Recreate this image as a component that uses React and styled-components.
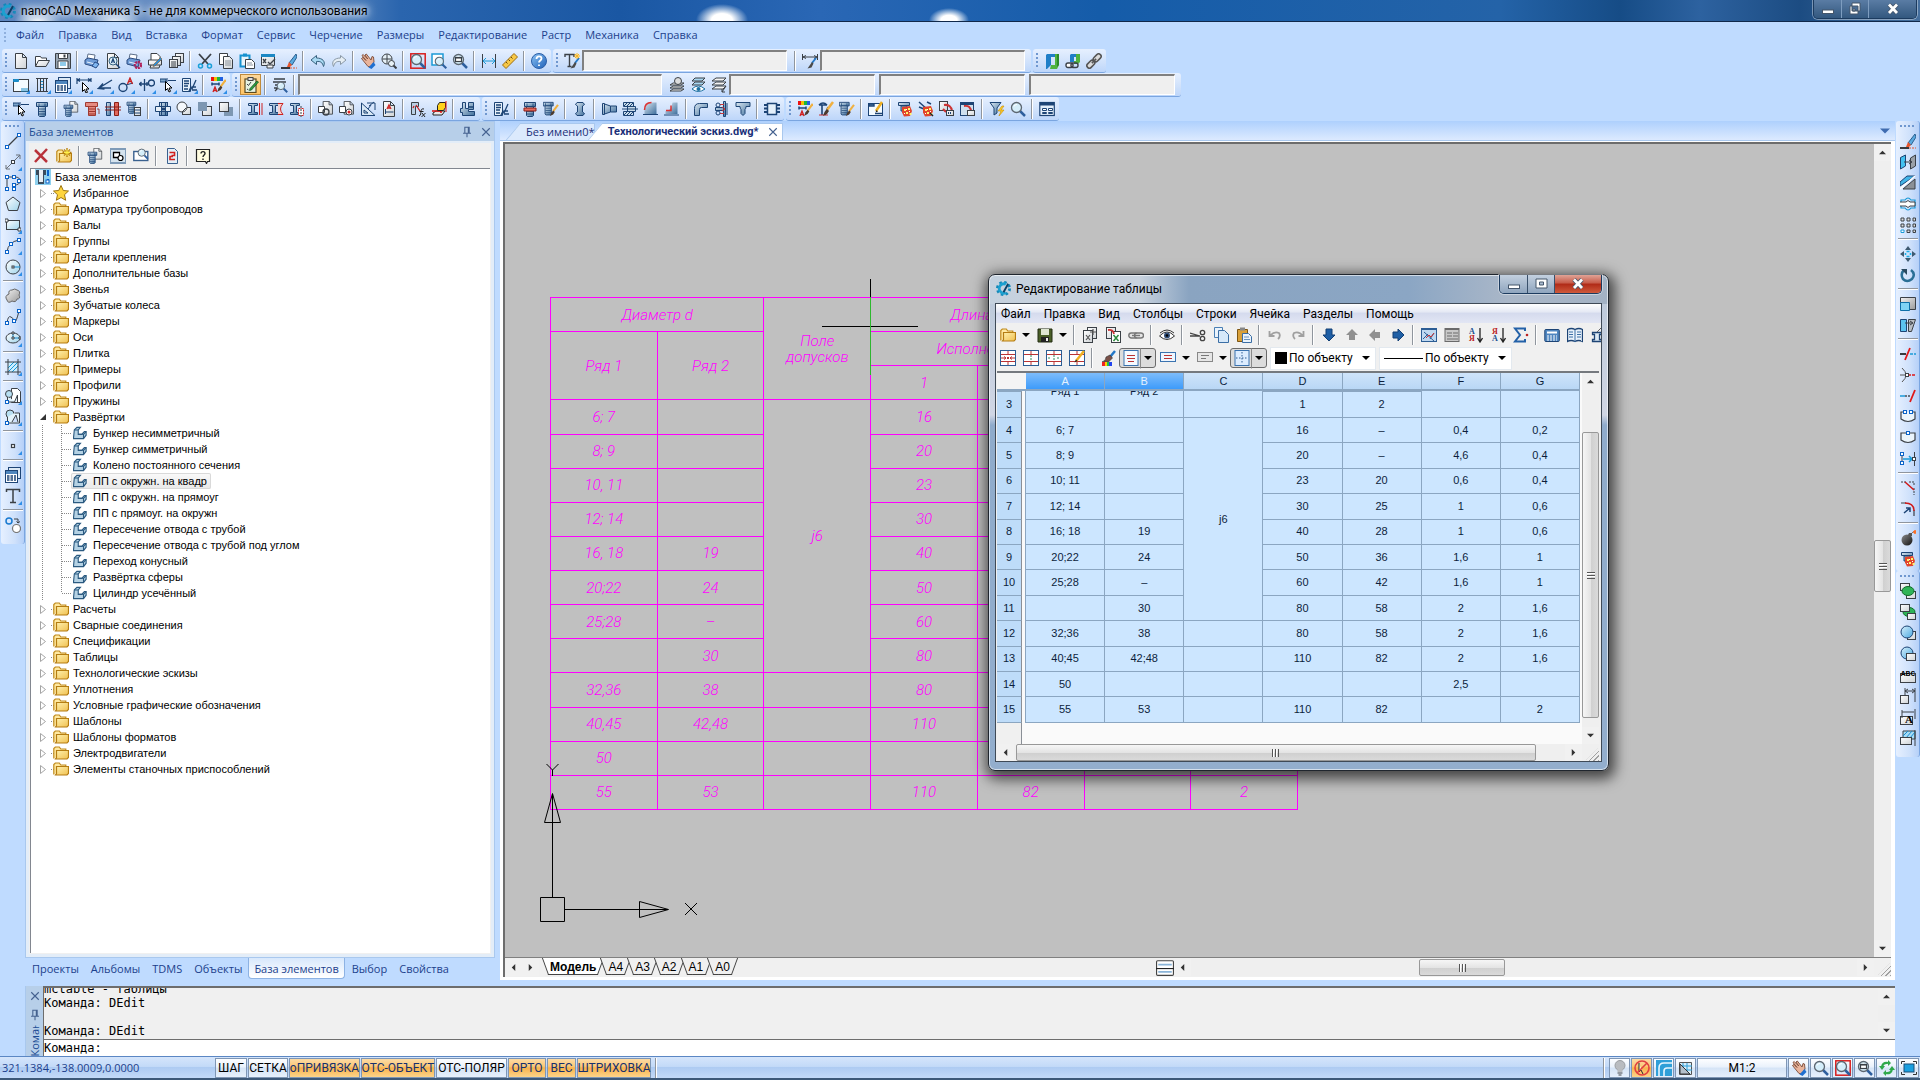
import React, { useState } from "react";
import styled, { createGlobalStyle, css } from "styled-components";

const GlobalStyle = createGlobalStyle`
  * { box-sizing: border-box; }
  body {
    margin: 0;
    overflow: hidden;
    background: #bfdbff;
    font-family: "Open Sans", "Noto Sans", sans-serif;
    font-size: 12px;
    color: #000;
  }
  button, select, input { font: inherit; color: inherit; }
  ul { list-style: none; margin: 0; padding: 0; }
`;

/* ---------- icons ---------- */

const ink = "#3b4046";
const navy = "#1d4475";

const bolt = (
  <g stroke={navy} strokeWidth="1">
    <path d="M2.5 1.500h11v4h-11z" fill="url(#steel)" />
    <path d="M4.5 5.500h7v9l-1 1h-5l-1-1z" fill="url(#steel)" />
    <path d="M5 8h6M5 10.500h6M5 13h6" strokeWidth=".8" />
    <path d="M5 2.500v2.500M11 2.500v2.500" strokeWidth=".8" />
  </g>
);
const page = (
  <path d="M2.5.5h7l4 4v11h-11zM9.5.5v4h4" fill="url(#page)" stroke={ink} />
);
const lens = (
  <g>
    <path d="M10 10l5 5" stroke="#2e5f9e" strokeWidth="2.5" />
    <circle cx="6.5" cy="6.5" r="5" fill="#d5eefa" stroke="#5c6670" strokeWidth="1.3" />
    <path d="M4 5.500a3 3 0 0 1 3-2" stroke="#fff" fill="none" />
  </g>
);
const brush = (
  <g>
    <path d="M15 1l-6 8" stroke="#f0b040" strokeWidth="2.5" />
    <path d="M9 8l2 2-2 3-4 2 1.500-4z" fill="#4b3a2e" />
  </g>
);
const hand = (
  <g>
    <path
      d="M1.5 5.500L3 4.500l3 3-4-5 1.200-1 4.500 4.500L5 2l1.300-1 4.700 6 1-3.500 1.500.5.5 5-2.500 5-3.500-.5z"
      fill="#e9b49b"
      stroke="#7b4a35"
      strokeWidth=".9"
    />
    <path d="M8.500 14.500l5-5.500 2 3-4 4z" fill="#1f6fd0" />
  </g>
);
const arrowCursor = (
  <path d="M5.500 4.500v9l2-2 1.500 3.500 1.500-.7-1.500-3.300h3z" fill="#fff" stroke="#000" />
);
const folder = (
  <g>
    <path d="M.8 13.500v-10l1.500-1.500h4l1.500 2h5v2" fill="#ffe9a0" stroke="#c08a1c" strokeWidth="1.2" />
    <path d="M3.500 5.500h12v7l-1.500 1.500h-11.500l1-1.500z" fill="url(#gold)" stroke="#b57d12" strokeWidth="1.2" />
  </g>
);
const printer = (
  <g>
    <path d="M4 1l7 1-1 6-7-2z" fill="#fff" stroke="#5d6f8a" />
    <path d="M1 7l3-2 10 2-2 7-11-3z" fill="#6f9cd6" stroke="#2a4a80" />
    <path d="M3 9l8 2" stroke="#e8f2ff" />
  </g>
);
const grey = (x, y, w = 8, h = 7) => (
  <rect x={x} y={y} width={w} height={h} fill="url(#page)" stroke={ink} />
);
const node = (x, y) => (
  <rect x={x - 1.5} y={y - 1.5} width="3" height="3" fill="#fff" stroke="#0a63c9" />
);
const sand = (
  <g>
    <path d="M5 6l8-1 2 5-2 5-6 .5-2-4z" fill="#e2452b" />
    <path d="M7 8h2v2H7zM11 7h2v2h-2zM9 11h2v2H9zM12.500 12h2v2h-2z" fill="#fff36b" />
    <path d="M9 8h1v1H9zM12 10h1v1h-1zM7 12h1v1H7z" fill="#fff" />
  </g>
);
const ibeam = (
  <path d="M1.500 2.500h9v2h-3v7h3v2h-9v-2h3v-7h-3z" fill="url(#steel)" stroke={navy} />
);

const icons = {
  new: page,
  open: (
    <>
      <path d="M1.500 13V3.500h5l1 1.500h5v2.500" fill="#fff" stroke={ink} />
      <path d="M1.500 13.500l3-6h11l-3.500 6z" fill="url(#page)" stroke={ink} />
    </>
  ),
  save: (
    <>
      <path d="M.5.5h15v15h-15z" fill="#9aa6b2" stroke={ink} />
      <path d="M3.500.5h9v5h-9zM3 8h10v7.500H3z" fill="#fff" stroke={ink} />
      <path d="M5 10h6M5 12h6" stroke="#2398d4" />
      <path d="M9.500 1.500v3" stroke={ink} strokeWidth="2" />
    </>
  ),
  print: (
    <>
      {printer}
      <path d="M11 9l4 2-3 4-4-2z" fill="#7fb6f0" stroke="#244a86" />
    </>
  ),
  preview: (
    <>
      {page}
      <circle cx="8" cy="8" r="4" fill="#dff1fa" stroke="#35627f" />
      <path d="M6.500 10L8 6l1.500 4M11 11l4 4" stroke={navy} fill="none" strokeWidth="1.4" />
    </>
  ),
  printset: (
    <>
      {printer}
      <circle cx="12" cy="12" r="3" fill="none" stroke="#b0205a" strokeWidth="2.5" strokeDasharray="2 .7" />
    </>
  ),
  plot: (
    <>
      <path d="M4 7V.5h6l3 3V7" fill="#fff" stroke={ink} />
      <path d="M1.500 7h13v5h-13zM4 12l-1 3h9l1-3" fill="url(#page)" stroke={ink} />
      <path d="M15 6l-7 7-2 .5.5-2 7-7z" fill="#2d8fd8" stroke="#8a5a2b" strokeWidth=".6" />
    </>
  ),
  batch: (
    <>
      {grey(7.5, 0.5, 8, 9)}
      {grey(4.5, 3.5, 8, 9)}
      {grey(1.5, 6.5, 8, 8)}
      <path d="M3 9h5M3 11h5M3 13h5" stroke={ink} />
    </>
  ),
  cut: (
    <>
      <path d="M2 1l9 10M14 1L5 11" stroke={ink} strokeWidth="1.8" />
      <circle cx="3.5" cy="13" r="2" fill="none" stroke="#1aa0d8" strokeWidth="1.5" />
      <circle cx="12.5" cy="13" r="2" fill="none" stroke="#1aa0d8" strokeWidth="1.5" />
    </>
  ),
  copy: (
    <>
      <path d="M1.500.5h8v11h-8z" fill="#fff" stroke={ink} />
      <path d="M5.500 3.500h6l3 3v9h-9z" fill="url(#page)" stroke={ink} />
      <path d="M7 8h6M7 10h6M7 12h6" stroke="#8a929a" />
    </>
  ),
  paste: (
    <>
      <path d="M1.500 2.500h9v11h-9z" fill="#e8f4fb" stroke="#1591cf" strokeWidth="2" />
      <path d="M4 .5h4v3H4z" fill="#1591cf" />
      <path d="M6.500 6.500h6l3 3v6h-9z" fill="#fff" stroke={ink} />
      <path d="M8 10h5M8 12h6" stroke="#8a929a" />
    </>
  ),
  pastespec: (
    <>
      <path d="M1.500 1.500h13v11h-13z" fill="url(#page)" stroke={ink} />
      <path d="M1 1h14v3H1z" fill="#1b88c4" />
      <path d="M3 6l3 4M6 6l-3 4M8 9l2 2 5-5" stroke={ink} strokeWidth="1.3" fill="none" />
      <path d="M7 12h6v3H7z" fill="#f3f3f3" stroke={ink} />
    </>
  ),
  erase: (
    <>
      <path d="M15 1l-7 9 3 2 5-8z" fill="#5aa9de" stroke="#2a5f8f" />
      <path d="M8 9l3 3-2 2H6z" fill="#e8552c" />
      <path d="M0 15h9" stroke="#000" strokeWidth="1.5" />
      <path d="M9 15h7" stroke="#e8552c" strokeDasharray="2 1" />
    </>
  ),
  undo: <path d="M6.500 2.500L1 7l5.500 4.500v-3c4-.5 6 1 7 5 2.500-5-1-8.500-7-8.500z" fill="#a8d9f2" stroke="#38627f" />,
  redo: <path d="M9.500 2.500L15 7l-5.500 4.500v-3c-4-.5-6 1-7 5-2.500-5 1-8.500 7-8.500z" fill="#e6eef4" stroke="#8b99a6" />,
  hand,
  zoomrt: (
    <>
      <circle cx="6" cy="6" r="5" fill="#e7f1f7" stroke={ink} />
      <path d="M6 1.500v9M1.500 6h9" stroke={ink} />
      <circle cx="10.5" cy="10.5" r="3" fill="#e7f1f7" stroke={ink} />
      <path d="M12.500 12.500l3 3" stroke={ink} strokeWidth="2" />
    </>
  ),
  zoomwin: (
    <>
      <rect x=".8" y=".8" width="14.4" height="14.4" fill="none" stroke="#d81e1e" strokeWidth="1.5" />
      {lens}
    </>
  ),
  zoomext: (
    <>
      <rect x="1" y="1" width="11" height="11" fill="#fff" stroke="#1b9ad6" strokeWidth="1.5" />
      <g transform="translate(3 3) scale(.82)">{lens}</g>
    </>
  ),
  zoomall: (
    <>
      {lens}
      <rect x="3.5" y="4.5" width="6" height="4" fill="#fff" stroke={ink} strokeWidth="1.2" />
      <path d="M3.500 5h6" stroke={ink} />
    </>
  ),
  dist: (
    <>
      <path d="M1.500 1v14M14.500 1v14" stroke={ink} />
      <path d="M2 8h12M5 5L2 8l3 3M11 5l3 3-3 3" stroke="#1a9ad8" fill="none" />
    </>
  ),
  ruler: (
    <>
      <path d="M12 .5l3.500 3.500L4 15.500.5 12z" fill="#f7c846" stroke="#9c6c10" />
      <path d="M4 9l1.500 1.500M6.500 6.500L8 8M9 4l1.500 1.500" stroke="#6b4a08" />
    </>
  ),
  help: (
    <>
      <circle cx="8" cy="8" r="7.5" fill="url(#ball)" stroke="#2c5fa8" />
      <path d="M5.500 6c0-3.500 5-3.500 5-.5 0 2-2.500 2-2.500 4M8 11.500v1.500" stroke="#fff" strokeWidth="1.8" fill="none" />
    </>
  ),
  textstyle: (
    <>
      <path d="M1 4V1.500h9V4M5.500 1.500v12M3.500 13.500h4" stroke={ink} strokeWidth="1.4" fill="none" />
      <path d="M15 5l-4 5" stroke="#2378c8" strokeWidth="2" />
      <path d="M11 9l1.500 1.500-2 4-4 1z" fill="#4a4a4a" />
      <path d="M13 0v6M10 3h6M11 1l4 4M15 1l-4 4" stroke="#ffb81c" />
    </>
  ),
  dimstyle: (
    <>
      <path d="M.5 1v6M15.500 1v6M1 4h14M4 2.500L1 4l3 1.500M12 2.500L15 4l-3 1.500" stroke={ink} fill="none" />
      <path d="M14 5l-4 5" stroke="#2378c8" strokeWidth="2" />
      <path d="M10 9l1.500 1.500-2 4-4 1z" fill="#4a4a4a" />
    </>
  ),
  ncad: (
    <>
      <path d="M3 1h8v3H7v8l-4 4H2V2z" fill="#1f7fc8" />
      <path d="M11 1h4v11l-2 4H6l1-4h4z" fill="#4fb33f" />
      <path d="M13 1h2v11l-2 2z" fill="#2c8a2c" />
    </>
  ),
  ncadlink: (
    <>
      <path d="M6 1h5v3H9v5H5V2z" fill="#1f7fc8" />
      <path d="M11 1h4v8l-2 2H9V8h2z" fill="#4fb33f" />
      <rect x="1" y="10" width="7" height="4.5" rx="2" fill="#fff" stroke={ink} strokeWidth="1.4" />
      <rect x="6" y="10" width="7" height="4.5" rx="2" fill="none" stroke={ink} strokeWidth="1.4" />
    </>
  ),
  chain: (
    <g transform="rotate(-45 8 8)" fill="#dcdcdc" stroke="#555" strokeWidth="1.6">
      <rect x="-1" y="5.5" width="9" height="5" rx="2.5" />
      <rect x="8" y="5.5" width="9" height="5" rx="2.5" />
      <path d="M5 8h6" />
    </g>
  ),
  frame: (
    <>
      <rect x=".5" y="2.5" width="15" height="12" fill="#f4fbff" stroke={ink} />
      <path d="M.5 2.500h5v2h-5zM8 12h7M8 14h7" fill="#1a8cc8" stroke="#1a8cc8" />
    </>
  ),
  column: (
    <>
      <path d="M2 1.500h12M2 14.500h12M3.500 1v14M12.500 1v14M6.500 1v14M9.500 1v14" stroke={ink} />
      <path d="M7 4h2v1H7zM7 7h2v1H7zM7 10h2v1H7z" fill="#1a8cc8" />
    </>
  ),
  cards: (
    <>
      <rect x="3.5" y=".5" width="12" height="11" fill="#dce9f5" stroke={navy} />
      <rect x=".5" y="3.5" width="12" height="12" fill="#fff" stroke={navy} />
      <path d="M1 4h11v3H1z" fill="#4f86bd" />
      <path d="M2 9h2.500M5.500 9H8M9 9h2M2 11h2.500M5.500 11H8M9 11h2M2 13h2.500M5.500 13H8M9 13h2" stroke={navy} strokeWidth="1.3" />
    </>
  ),
  dimsel: (
    <>
      <path d="M1 1v6M15 1v4M1 3h14M4 1.500L1.500 3 4 4.500M12 1.500L14.500 3 12 4.500" stroke={navy} strokeWidth="1.2" fill="none" />
      <g transform="translate(1 1)">{arrowCursor}</g>
    </>
  ),
  leader: <path d="M15 3L2 11h12M6 6.500l-4.500 5 6 .5" stroke={navy} fill="none" strokeWidth="1.4" />,
  nodeA: (
    <>
      <circle cx="5" cy="10.5" r="4" fill="none" stroke={navy} strokeWidth="1.4" />
      <path d="M8 8l7-2" stroke={navy} />
      <path d="M9.500 7l2.500-6 2.500 6M10.500 4.500h3.500" stroke="#c81e1e" fill="none" strokeWidth="1.3" />
    </>
  ),
  axis: (
    <>
      <path d="M0 7h10M5.500 2v12M2.500 5l-2 2 2 2M8 5v4" stroke={navy} fill="none" strokeWidth="1.3" />
      <circle cx="12.5" cy="6" r="3" fill="none" stroke={navy} strokeWidth="1.3" />
    </>
  ),
  selbox: (
    <>
      <path d="M0 2h6v3H0zM7 1v4M8 3.500h8" fill="#7da5cb" stroke={navy} />
      {arrowCursor}
    </>
  ),
  notes: (
    <>
      <path d="M1.500 1.500h8v13h-8z" fill="#e7f1fa" stroke={navy} />
      <path d="M3 4h5M3 6.500h5M3 9h4M3 12h4M8 14l2-4 1 2 4-9M11 10h4M11 13h5" stroke={navy} fill="none" strokeWidth="1.3" />
    </>
  ),
  palette: (
    <>
      <path d="M1 0h3v4H1z" fill="#e11" />
      <path d="M4 0h3v4H4z" fill="#f0c000" />
      <path d="M7 0h3v4H7z" fill="#1bb53c" />
      <path d="M10 0h3v4h-3z" fill="#2060e0" />
      <path d="M2 5.500v3M9 5.500v3M2 7h7" stroke={navy} strokeWidth="1.5" />
      <path d="M3 15l2-5 2 5M4 13.500h3" stroke="#d02020" fill="none" strokeWidth="1.3" />
      <g transform="translate(3 2) scale(.85)">{brush}</g>
    </>
  ),
  clip: (
    <>
      <rect x="2" y="2" width="11" height="13.5" fill="#e6f2e2" stroke="#5d4a20" strokeWidth="1.2" />
      <rect x="5" y=".5" width="5" height="3" fill="#ddd" stroke="#444" />
      <path d="M4 7l1.500 1.500L8 5M4 12l1.500 1" stroke={ink} fill="none" />
      <path d="M15.500 5l-7 8-2 .5.5-2L14 4z" fill="#2ea043" stroke="#114b1c" strokeWidth=".7" />
    </>
  ),
  find: (
    <>
      <path d="M2 2h11M1 5h13M3 8h4M2 11h3M3 14l3-3" stroke={ink} strokeWidth="1.3" />
      <g transform="translate(4 4) scale(.75)">{lens}</g>
    </>
  ),
  layers: (
    <>
      <path d="M1 8l3-2h11l-3 2zM1 11l3-2h11l-3 2zM1 14l3-2h11l-3 2z" fill="#f5f5f5" stroke={ink} />
      <circle cx="9" cy="4" r="3.5" fill="#ddd" stroke={ink} />
    </>
  ),
  layeye: (
    <>
      <path d="M2 4l3-3h10l-3 3zM2 8l3-3h10l-3 3z" fill="#a9d7f2" stroke={ink} />
      <path d="M2 12q6-6 13 0-7 5-13 0z" fill="#fff" stroke="#1b6fa0" />
      <circle cx="8.5" cy="12" r="2" fill="#1b6fa0" />
    </>
  ),
  layarrow: (
    <>
      <path d="M1 4l4-3h10l-3 3zM1 8l4-3h10l-3 3zM1 12l4-3h10l-3 3z" fill="#f5f5f5" stroke={ink} />
      <path d="M15 9l-4 6M11 12v3h3" stroke={ink} fill="none" />
    </>
  ),
  bolt,
  boltpage: (
    <>
      <g transform="translate(5 0) scale(.72)">{page}</g>
      <g transform="translate(-1 3) scale(.8)">{bolt}</g>
    </>
  ),
  boltred: (
    <>
      <path d="M1.500 1.500h12v4h-12zM4.500 5.500h7v9h-7z" fill="#e58a80" stroke="#a03a32" />
      <path d="M5 8h6M5 10.500h6M5 13h6M13 8h2v5" stroke="#8a1f18" strokeWidth=".8" fill="none" />
    </>
  ),
  boltpair: (
    <>
      <path d="M1.500 1.500h4v13h-4z" fill="url(#steel)" stroke={navy} />
      <path d="M9.500 1.500h4v13h-4z" fill="#e0675c" stroke="#8a1f18" />
      <path d="M0 6h16M0 9h16" stroke="#8a1f18" />
    </>
  ),
  boltset: (
    <>
      <g transform="translate(-1 0) scale(.8)">{bolt}</g>
      {grey(8.5, 6.5, 6, 8)}
      <path d="M9 9h5M9 12h5" stroke={navy} />
    </>
  ),
  motor: (
    <>
      <rect x="4.5" y="1.5" width="8" height="13" fill="url(#steel)" stroke={navy} />
      <path d="M.5 5.500h15v5h-15zM6.500 2v12M10.500 2v12" fill="#e8f0f8" stroke={navy} />
      <path d="M6 8h5" stroke={navy} strokeWidth="3" />
    </>
  ),
  circsq: (
    <>
      {grey(6.5, 6.5, 8, 7)}
      <circle cx="6" cy="6" r="5" fill="#f4f8fc" stroke={ink} />
      <path d="M6 11l4-4" stroke={ink} />
    </>
  ),
  sqback: (
    <>
      {grey(5.5, 5.5, 9, 9)}
      <path d="M1 1h9v9H1z" fill="#7d97b2" />
    </>
  ),
  sqfront: (
    <>
      <path d="M6 6h9v9H6z" fill="#7d97b2" />
      {grey(1.5, 1.5, 9, 9)}
    </>
  ),
  ibeam: (
    <>
      {ibeam}
      <path d="M12.500 2v12M15 2v12" stroke="#c22" />
    </>
  ),
  ibeamc: (
    <>
      {ibeam}
      <path d="M10 2.500h5q-5 5.500 0 11h-5" stroke="#c22" fill="#f5d3d0" />
    </>
  ),
  ibeamd: (
    <>
      {ibeam}
      <path d="M9.500 7.500h5v7h-5z" fill="#fff" stroke="#c22" strokeDasharray="2 1" />
      <path d="M12 5v11" stroke={ink} strokeDasharray="2 1" />
    </>
  ),
  pagec: (
    <>
      <g transform="translate(3 0) scale(.85)">{page}</g>
      <path d="M.5 5.500h6v6h-6z" fill="#fff" stroke={ink} />
      <circle cx="8" cy="11" r="3" fill="none" stroke={ink} strokeWidth="1.3" />
    </>
  ),
  pager: (
    <>
      <g transform="translate(3 0) scale(.85)">{page}</g>
      <path d="M.5 5.500h6v6h-6z" fill="#fff" stroke={ink} />
      <circle cx="10" cy="11" r="3" fill="#fff" stroke={ink} />
      <circle cx="10" cy="11" r="1.5" fill="#d22" />
    </>
  ),
  drawing: (
    <>
      <path d="M1.500 2v12.500H15zM4 9v3h4z" fill="#d9e8f5" stroke={navy} />
      <path d="M7 2h8v7M9 5l5-4M8 8l3-4" stroke={navy} fill="none" />
    </>
  ),
  pageA: (
    <>
      {page}
      <path d="M6 8l2-4 2 4M7 7h2" stroke="#c22" fill="none" strokeWidth="1.3" />
      <path d="M4.500 8v5M4.500 11h8" stroke={navy} />
    </>
  ),
  fx: (
    <>
      <path d="M1.500 13.500v-12h7v4h-3v8z" fill="#b9cfe4" stroke={ink} />
      <path d="M6 4l4 6M4 5l-1 2" stroke="#c22" strokeWidth="1.3" />
      <path d="M9 15q2 0 2-4t3-3M9.500 10.500h4M12 12l3 4M15.500 12l-4 4" stroke="#222" fill="none" />
    </>
  ),
  cube: (
    <>
      <path d="M2 12l3-2h9l-3 4H2z" fill="#e8e8e8" stroke="#222" />
      <path d="M1 10h9v2" fill="none" stroke="#d11" strokeWidth="1.5" />
      <path d="M6.500 4.500l2-3h6v5l-2 3h-6z" fill="#ffd21c" stroke="#222" />
      <path d="M15 0v11" stroke="#d11" />
    </>
  ),
  vise: (
    <>
      <path d="M2.500 1.500h3v6h3v-6h5v7h-5v2h6v4h-12v-3h-2v-4h2z" fill="url(#steel)" stroke={navy} />
      <path d="M8 6h5" stroke={navy} strokeWidth="1.5" />
    </>
  ),
  boltcap: (
    <>
      {bolt}
      <path d="M2 7h12v3H2z" fill="#e46a5f" stroke="#8a1f18" />
    </>
  ),
  boltbrush: (
    <>
      <g transform="translate(-2 0) scale(.9)">{bolt}</g>
      <g transform="translate(3 3) scale(.8)">{brush}</g>
    </>
  ),
  shaft: <path d="M5 1.500h6l1.500 2-2 1.500v6l2 1.500-1.500 2H5l-1.500-2 2-1.500v-6l-2-1.500z" fill="url(#steel)" stroke={navy} />,
  cone: <path d="M1.500 2.500h2v11h-2zM3.500 3l6 2v6l-6 2zM9.500 5h6v6h-6z" fill="url(#steel)" stroke={navy} />,
  section: (
    <>
      <path d="M1.500 1.500h10v4h-10zM1.500 10.500h10v4h-10zM5.500 5.500h8v5h-8z" fill="#c9dceb" stroke={navy} />
      <path d="M2 5l3-3M5 5l3-3M8 5l3-3M2 14l3-3M5 14l3-3M8 14l3-3M0 8h16" stroke={navy} />
    </>
  ),
  chamfer: (
    <>
      <path d="M1.500 13V7q0-5.500 6-5.500h6V13z" fill="url(#steel)" />
      <path d="M1.500 9q0-7.500 7-7.500" stroke="#d33" fill="none" strokeWidth="1.5" />
      <path d="M0 13.500h15" stroke={navy} />
    </>
  ),
  fillet: (
    <>
      <path d="M1.500 13v-3q6 0 7-8.500h5V13z" fill="url(#steel)" />
      <path d="M2 9.500h5v-5" stroke="#d33" fill="none" strokeWidth="1.5" />
      <path d="M0 14h15" stroke={navy} />
    </>
  ),
  elbow: <path d="M1.500 14.500v-7q0-5 5-5h8v4h-6q-2 0-2 2v6z" fill="url(#steel)" stroke={navy} />,
  flange: (
    <>
      <path d="M9.500.5h2v15h-2zM1.500 6.500h8v3h-8zM13 2v12" fill="url(#steel)" stroke={navy} />
      <path d="M6 3.500h4M6 12.500h4M8 6l3 2-3 2" stroke="#c33" fill="none" />
      <circle cx="4" cy="4" r="2" fill="none" stroke={navy} />
      <circle cx="4" cy="12" r="2" fill="none" stroke={navy} />
    </>
  ),
  tee: <path d="M1 1.500h14v4h-4q0 2-1 3v4l-2 2-2-2v-4q-1-1-1-3H1z" fill="url(#steel)" stroke={navy} />,
  spring: (
    <>
      <rect x="3.5" y="2.5" width="9" height="11" fill="#e5f0fa" stroke={navy} strokeWidth="1.5" />
      <path d="M1.500 3v10M14.500 3v10" stroke={navy} strokeWidth="3" strokeDasharray="2 1.500" />
    </>
  ),
  abrush: (
    <>
      <path d="M1 4q4-4 8 0M4 14V4M1 4h8M7 14l3-8" stroke={navy} fill="none" strokeWidth="1.6" />
      <path d="M1 14h9" stroke="#c33" />
      {brush}
    </>
  ),
  framep: (
    <>
      <rect x=".5" y="2.5" width="14" height="12" fill="#f4fbff" stroke={navy} />
      <path d="M1 3h5v2H1zM7 12.500h7" fill="#6b95bd" stroke={navy} strokeWidth="1.4" />
      <path d="M14 1l-6 9" stroke="#f0b020" strokeWidth="2.5" />
      <path d="M8.500 9L7.500 11.500 10 10.500z" fill="#222" />
    </>
  ),
  sand1: (
    <>
      <path d="M1.500 1.500h11v3h-11zM4 5h6v5H4z" fill="url(#steel)" stroke={navy} />
      {sand}
    </>
  ),
  sand2: (
    <>
      <path d="M1 1l9 8M1 6l5 2M9 1l4 2" stroke={navy} strokeWidth="1.5" />
      {sand}
      <path d="M12 12l3 3" stroke="#222" strokeWidth="1.5" />
    </>
  ),
  clock1: (
    <>
      {grey(0.5, 0.5, 8, 9)}
      <path d="M5 4q7-1 8 6M4 8l3 3" stroke="#c33" fill="none" strokeWidth="2" />
      {grey(7.5, 9.5, 7, 5)}
      <path d="M9 12h4" stroke={navy} strokeWidth="2" strokeDasharray="1 1" />
    </>
  ),
  clock2: (
    <>
      <rect x=".5" y="1.5" width="13" height="13" fill="#cfe0ef" stroke={navy} />
      <path d="M0 2.500h14" stroke={navy} strokeWidth="3" />
      <path d="M4 5q7-1 7 6" stroke="#c33" fill="none" strokeWidth="2" />
      {grey(7.5, 9.5, 7, 5)}
    </>
  ),
  filter: (
    <>
      <path d="M1 1.500h11L8 7v5l-3 2V7z" fill="url(#steel)" stroke={navy} />
      <path d="M13 5l-4 5h3l-2 5 5-6h-3l3-4z" fill="#ffcf26" stroke="#c88a00" strokeWidth=".6" />
    </>
  ),
  lens,
  tbl: (
    <>
      <rect x=".8" y="1.5" width="14.5" height="13" fill="#e3eefa" stroke={navy} strokeWidth="1.2" />
      <path d="M1 3h14" stroke={navy} strokeWidth="3" />
      <path d="M3.500 7.500h4v2h-4zM9.500 7.500h4v2h-4zM3.500 11.500h4v1h-4zM9.500 11.500h4v1h-4z" fill="#fff" stroke={navy} />
    </>
  ),
  del: <path d="M2 2l12 12M14 1L2 14" stroke="#b8323a" strokeWidth="2.5" />,
  foldernew: (
    <>
      {folder}
      <path d="M11 0v9M6.500 4.500h9M8 1.500l6 6M14 1.500l-6 6" stroke="#b57d12" strokeWidth="1.4" />
      <path d="M11 1.500v6M8 4.500h6M9 2.500l4 4M13 2.500l-4 4" stroke="#fff04a" />
    </>
  ),
  shapes: (
    <>
      <rect x="0" y="0" width="16" height="16" fill="#7f9bb8" />
      <path d="M1 2h14v12H1z" fill="#d5e3ee" />
      <path d="M3.500 4.500h6v5h-6z" fill="#fff" stroke="#000" strokeWidth="1.3" />
      <circle cx="10.5" cy="10" r="2.5" fill="#fff" stroke="#000" strokeWidth="1.2" />
    </>
  ),
  lensbox: (
    <>
      <rect x=".8" y="3.5" width="14" height="9" fill="#fff" stroke="#3a618f" strokeWidth="1.4" />
      <g transform="translate(4 0) scale(.72)">{lens}</g>
    </>
  ),
  refresh: (
    <>
      <path d="M3.500.5h7l3 3v12h-10z" fill="#e4eef7" stroke="#3a618f" />
      <path d="M5.500 4.500h5v3h-3M11 11.500H6v-3h3" stroke="#d12020" fill="none" strokeWidth="1.6" />
    </>
  ),
  helpnote: (
    <>
      <path d="M1.500 1.500h13v12h-2l-1 2-1-2h-9z" fill="#fffce0" stroke="#222" strokeWidth="1.2" />
      <path d="M6 5.500c0-2.500 4-2.500 4 0 0 1.500-2 1.500-2 3.500M8 10.500v1.500" stroke="#222" strokeWidth="1.4" fill="none" />
    </>
  ),
  root: (
    <>
      <path d="M0 0h16v16H0z" fill="#8ed0ee" />
      <path d="M1 1h10v5H9v9H3V6H1z" fill="#3a4b5c" />
      <path d="M4 1h4v12H4z" fill="#e8eef3" />
      <path d="M13 1v6M13 10v4" stroke="#0a63c9" strokeWidth="2" />
      {node(12.5, 12.5)}
    </>
  ),
  star: <path d="M8 .5l2.300 5 5.200.5-4 3.700 1.200 5.600L8 12.500l-4.700 2.800 1.200-5.600-4-3.700 5.200-.5z" fill="#ffd53d" stroke="#9c7410" />,
  folder,
  part: (
    <>
      <path d="M1.500 4.500l3-3h4l-2.500 3v5h4l3-3h2v4l-3 4h-11.500z" fill="#b5d2e4" stroke="#2b5a80" strokeWidth="1.3" />
      <path d="M1.500 4.500H6M6 9.500h6v5M12 9.500l3-3" stroke="#2b5a80" strokeWidth="1.2" fill="none" />
    </>
  ),
  /* drawing */
  line: (
    <>
      <path d="M2 14L14 2" stroke={ink} strokeWidth="1.2" />
      {node(2, 14)}
      {node(14, 2)}
    </>
  ),
  ray: (
    <>
      <path d="M1 15L15 1M11 1h4v4M1 11v4h4" stroke="#6a7078" fill="none" />
      <rect x="6.5" y="6.5" width="3" height="3" fill="#fff" stroke={ink} />
    </>
  ),
  pline: (
    <>
      <path d="M2 14V2h8q5 0 5 4t-6 4v4" stroke={ink} fill="none" />
      {node(2, 2)}
      {node(2, 14)}
      {node(9, 2)}
      {node(14, 6)}
      {node(9, 10)}
      {node(9, 14)}
    </>
  ),
  polygon: <path d="M8 1l7 5.500-2.500 8h-9L1 6.500z" fill="url(#sky)" stroke={ink} />,
  rect: (
    <>
      <rect x="1.5" y="3.5" width="13" height="9" fill="url(#sky)" stroke={ink} />
      <path d="M0 2h3v3H0zM13 11h3v3h-3z" fill="#fff" stroke={ink} />
    </>
  ),
  arc: (
    <>
      <path d="M2 14Q3 4 14 2" stroke={ink} fill="none" />
      {node(2, 14)}
      {node(6, 6)}
      {node(14, 2)}
    </>
  ),
  circle: (
    <>
      <circle cx="8" cy="8" r="7" fill="url(#sky)" stroke={ink} />
      <path d="M8 8h7" stroke="#1a8cd0" />
      <rect x="7" y="7" width="2" height="2" fill="#fff" stroke={ink} />
    </>
  ),
  cloud: <path d="M4 6q-1-4 3-4 3-2 5 0 4 1 2 5 2 4-2 4-1 4-5 2-4 3-5-1-3-4 2-6z" fill="url(#cloudy)" stroke="#666" />,
  spline: (
    <>
      <path d="M2 14q1-8 4-6t4 4 4-10" stroke={ink} fill="none" />
      {node(2, 14)}
      {node(9, 12)}
      {node(14, 2)}
    </>
  ),
  ellipse: (
    <>
      <ellipse cx="8" cy="8" rx="7" ry="5" fill="url(#sky)" stroke={ink} />
      <path d="M8 3v5h7" stroke="#1a8cd0" fill="none" />
      <path d="M7 7h2v2H7zM7 2h2v2H7zM14 7h2v2h-2z" fill="#fff" stroke={ink} />
    </>
  ),
  hatch: (
    <>
      <path d="M3 3h10v10H3z" fill="#cdeeff" />
      <path d="M3 9l6-6M3 13L13 3M7 13l6-6" stroke="#1a9ad8" />
      <path d="M3 0v16M13 0v16M0 3h16M0 13h16" stroke={ink} />
    </>
  ),
  region: (
    <>
      <path d="M6.500.5h6l3 3v11h-9z" fill="#fff" stroke={ink} />
      <circle cx="4" cy="6" r="3.5" fill="#b7dff2" stroke={ink} />
      <path d="M2.500 9v5h7l3-7v7" fill="#e3f3fb" stroke={ink} />
      {node(2, 14)}
    </>
  ),
  block: (
    <>
      <circle cx="5" cy="5" r="4" fill="#b7dff2" stroke={ink} />
      <path d="M2.500 8v6h12v-10h-5M7 13l4-7 2 7" fill="#e3f3fb" stroke={ink} />
      {node(2, 14)}
    </>
  ),
  point: <rect x="6.5" y="6.5" width="3" height="3" fill="#fff" stroke={ink} strokeWidth="1.2" />,
  text: <path d="M1.500 4V1.500h13V4M8 1.500v13M5 14.500h6" stroke={ink} strokeWidth="1.5" fill="none" />,
  circles: (
    <>
      <circle cx="4" cy="4" r="3" fill="none" stroke="#1a7ad0" strokeWidth="1.5" />
      <circle cx="11.5" cy="11.5" r="4" fill="#fff" stroke="#777" strokeWidth="1.2" />
      <path d="M9 2h4v4M11.500 4.500L13 6l2-1.500" stroke={ink} fill="none" />
    </>
  ),
  /* modify */
  mirror: (
    <>
      <path d="M.5 3.500l5-2.500v11l-5 3z" fill="#42c1f0" stroke={navy} />
      <path d="M15.500 1v11l-5 3V4z" fill="#9aa0a6" stroke={ink} />
      <path d="M4 8h7M9 6l3 2-3 2" stroke={ink} fill="none" />
    </>
  ),
  diag: (
    <>
      <path d="M0 11V7l7-6h8z" fill="#42b5e8" stroke={navy} />
      <path d="M3 14h12V4z" fill="#8b9096" stroke={ink} />
      <path d="M0 14L15 1" stroke="#fff" strokeWidth="1.5" />
    </>
  ),
  offset: (
    <>
      <path d="M1 4h4q3-4 6 0h4v8h-4q-3 4-6 0H1z" fill="none" stroke="#1a9ad8" strokeWidth="1.2" />
      <path d="M0 6h6q2-3 4 0h5v4h-5q-2 3-4 0H0" fill="#fff" stroke={ink} />
    </>
  ),
  array: (
    <>
      <path d="M1 1h3v3H1zM7 1h3v3H7zM13 1h2.500v3H13zM1 7h3v3H1zM7 7h3v3H7zM13 7h2.500v3H13zM7 13h3v2.500H7zM13 13h2.500v2.500H13z" fill="#ddd" stroke={ink} />
      <path d="M1 13h3v2.500H1z" fill="#fff" stroke="#1a9ad8" />
    </>
  ),
  move: (
    <>
      <path d="M8 0L5 4h6zM8 16l-3-4h6zM0 8l4-3v6zM16 8l-4-3v6z" fill="#3f5a70" />
      <path d="M6.500 5.500h3M6.500 10.500h3M5.500 7v2M10.500 7v2" stroke="#1ab0e8" strokeWidth="1.5" />
    </>
  ),
  rotate: (
    <>
      <path d="M11 3q5 4 1 9-5 4-9 0-3-5 1-9" stroke="#2a6f96" strokeWidth="2.5" fill="none" />
      <path d="M1 2h6v6z" fill="#2a4a60" />
    </>
  ),
  scale: (
    <>
      <path d="M.5 1.500h15v12h-15z" fill="url(#cloudy)" stroke={ink} />
      <path d="M.5 6.500h9v8h-9z" fill="#7fd3f5" stroke="#0d6fa8" />
    </>
  ),
  stretch: (
    <>
      <path d="M.5 2.500h6v12h-6z" fill="#5cc3ef" stroke={navy} />
      <path d="M8.500 14.500v-12h7l-4 12z" fill="#b9bec4" stroke={ink} />
      <path d="M5 6h7M10 4l3 2-3 2" stroke={ink} fill="none" />
    </>
  ),
  trim: (
    <>
      <path d="M0 8h6" stroke="#000" strokeWidth="1.5" />
      <path d="M10 8h6" stroke="#1a9ad8" strokeWidth="1.5" strokeDasharray="3 1" />
      <path d="M5 14L10 2" stroke="#e01818" strokeWidth="1.8" />
    </>
  ),
  extend: (
    <>
      <path d="M2 1q8 7 0 14M0 8h7" stroke="#555" fill="none" />
      <path d="M8 8h8" stroke="#e01818" strokeWidth="1.5" strokeDasharray="3 1" />
      <rect x="5.5" y="6.5" width="3" height="3" fill="#fff" stroke={ink} />
    </>
  ),
  lengthen: (
    <>
      <path d="M0 8h5" stroke="#1a9ad8" strokeWidth="1.5" />
      <path d="M5 8h6" stroke="#000" strokeDasharray="2 1" />
      <path d="M10 14l5-12" stroke="#e01818" strokeWidth="1.8" />
    </>
  ),
  break2: (
    <>
      <path d="M4 3H1v7q7 5 14 0V3h-3" stroke={ink} fill="#eaf4fb" strokeWidth="1.2" />
      {node(5, 3)}
      {node(11, 3)}
    </>
  ),
  break1: (
    <>
      <path d="M6 3H1v7q7 5 14 0V3h-5" stroke={ink} fill="#eaf4fb" strokeWidth="1.2" />
      {node(8, 3)}
    </>
  ),
  align: (
    <>
      <path d="M2 3v8M14.500 1v14" stroke={ink} />
      <path d="M3 8h9M9 5l3 3-3 3" stroke="#1a9ad8" strokeWidth="1.5" fill="none" />
      {node(2, 3)}
      {node(2, 12)}
      <rect x="12.5" y="6.5" width="3" height="3" fill="#fff" stroke={ink} />
    </>
  ),
  cham: (
    <>
      <path d="M1 2h5M14 8v7M9 2h5v4" stroke={ink} strokeDasharray="2 1" fill="none" />
      <path d="M5 2l9 8" stroke="#d01818" strokeWidth="1.5" />
    </>
  ),
  fil: (
    <>
      <path d="M1 2h5M14 9v6" stroke={ink} strokeWidth="1.2" />
      <path d="M5 2q9 0 9 8" stroke="#d01818" strokeWidth="1.5" fill="none" />
      <path d="M4 12l6-5M6 7h4v4" stroke={navy} fill="none" strokeWidth="1.5" />
    </>
  ),
  bomb: (
    <>
      <circle cx="7" cy="10" r="5.5" fill="url(#dark)" />
      <path d="M9 3h3v3l-2 1-2-2z" fill="#555" />
      <path d="M12 3q1-2 3-1" stroke="#777" fill="none" />
      <path d="M15 0v4M13 2h3" stroke="#ff6a1c" strokeWidth="1.5" />
    </>
  ),
  front1: (
    <>
      {grey(0.5, 0.5, 9, 7)}
      {grey(6.5, 8.5, 9, 7)}
      <ellipse cx="8" cy="8" rx="6" ry="4.5" fill="#2fb457" stroke="#116a2a" />
    </>
  ),
  front2: (
    <>
      <ellipse cx="9" cy="8" rx="6" ry="4.5" fill="#2fb457" stroke="#116a2a" />
      {grey(0.5, 0.5, 9, 7)}
      {grey(7.5, 9.5, 8, 6)}
    </>
  ),
  front3: (
    <>
      {grey(7.5, 6.5, 8, 8)}
      <circle cx="7" cy="7" r="6" fill="url(#sky2)" stroke={navy} />
    </>
  ),
  front4: (
    <>
      <circle cx="7" cy="7" r="6" fill="url(#sky2)" stroke={navy} />
      {grey(6.5, 7.5, 9, 7)}
    </>
  ),
  abc: (
    <>
      {grey(0.5, 6.5, 15, 9)}
      <text x="8" y="9" fontSize="8" fontWeight="700" textAnchor="middle" fill="#000" fontFamily="Liberation Mono, monospace">ABC</text>
    </>
  ),
  dimfront: (
    <>
      {grey(0.5, 7.5, 8, 8)}
      <path d="M5 0v8M15 0v14M5 3h10M8 1L5 3l3 2M12 1l3 2-3 2" stroke={ink} fill="none" />
    </>
  ),
  dimA: (
    <>
      {grey(0.5, 7.5, 12, 8)}
      <path d="M2 1v8M15 0v10M2 3h12" stroke={ink} />
      <text x="9" y="14" fontSize="11" fontWeight="700" textAnchor="middle" fill="#000" fontFamily="Liberation Serif, serif">A</text>
    </>
  ),
  hatchfront: (
    <>
      <path d="M3 1h12v8H3z" fill="#a8dcf5" stroke={ink} />
      <path d="M3 6l5-5M6 8l6-7M10 8l5-6" stroke="#1a8cd0" />
      {grey(0.5, 7.5, 11, 7)}
      <path d="M15 0v16" stroke={ink} />
    </>
  ),
  /* table editor */
  disk: (
    <>
      <path d="M1 2h14v13H1z" fill="#4a5f28" stroke="#222c12" />
      <path d="M4 2h8v6H4z" fill="#dfe6d2" />
      <path d="M4 10h8v5H4z" fill="#222" />
      <path d="M9 11h2v3H9z" fill="#eee" />
    </>
  ),
  xls1: (
    <>
      {grey(5.5, 0.5, 9, 11)}
      {grey(1.5, 3.5, 9, 12)}
      <path d="M4 8l4 5M8 8l-4 5M11 2v6M8 5h6" stroke="#555" strokeWidth="1.2" />
    </>
  ),
  xls2: (
    <>
      {grey(1.5, 0.5, 9, 11)}
      <rect x="6.5" y="4.5" width="9" height="11" fill="#fff" stroke={ink} />
      <path d="M8.500 8l5 6M13.500 8l-5 6" stroke="#2a8a3c" strokeWidth="1.5" />
      <path d="M3 3q5-1 6 4" stroke="#c33" fill="none" strokeWidth="1.8" />
    </>
  ),
  link: (
    <g fill="#e4e4e4" stroke="#777" strokeWidth="1.4">
      <rect x=".8" y="6" width="9" height="5" rx="2.5" />
      <rect x="6.5" y="6" width="9" height="5" rx="2.5" />
      <path d="M4 8.500h8" />
    </g>
  ),
  eye: (
    <>
      <path d="M.5 9q7.500-8 15 0-7.500 7-15 0z" fill="#fff" stroke="#333" />
      <circle cx="8" cy="8.5" r="3" fill="#33507a" />
      <circle cx="8" cy="8.5" r="1.3" fill="#000" />
      <path d="M1 6q7-6 14 0" stroke="#333" fill="none" />
    </>
  ),
  scissors: (
    <>
      <path d="M0 6l10 3M0 9h10" stroke="#444" strokeWidth="1.3" />
      <circle cx="12.5" cy="5.5" r="2.2" fill="none" stroke="#444" strokeWidth="1.3" />
      <circle cx="12.5" cy="11.5" r="2.2" fill="none" stroke="#444" strokeWidth="1.3" />
    </>
  ),
  copyblue: (
    <>
      <path d="M1.500.5h8v10h-8z" fill="#eaf3fc" stroke="#4a7fb5" />
      <path d="M5.500 3.500h6l4 4v8h-10z" fill="#d6e8f9" stroke="#3b6ea5" />
    </>
  ),
  clipboard: (
    <>
      <path d="M1.500 2.500h10v12h-10z" fill="#d9a038" stroke="#7d5512" />
      <path d="M4 .5h5v3H4z" fill="#888" />
      <path d="M6.500 6.500h6l3 3v6h-9z" fill="#eaf3fc" stroke="#3b6ea5" />
      <path d="M8 10h5M8 12.500h6" stroke="#6c94bd" />
    </>
  ),
  undog: <path d="M2.500 4v5h5M3 9q4-5 9-3 2 3-1 6" stroke="#a0a0a0" strokeWidth="1.8" fill="none" />,
  redog: <path d="M13.500 4v5h-5M13 9Q9 4 4 6q-2 3 1 6" stroke="#a0a0a0" strokeWidth="1.8" fill="none" />,
  adown: <path d="M8 14l6-6h-3V2H5v6H2z" fill="#1f5fa5" stroke="#123f75" />,
  aup: <path d="M8 2l6 6h-3v5H5V8H2z" fill="#909090" />,
  aleft: <path d="M2 8l6-6v3h5v6H8v3z" fill="#909090" />,
  aright: <path d="M14 8L8 2v3H3v6h5v3z" fill="#1f5fa5" stroke="#123f75" />,
  chart: (
    <>
      <rect x=".5" y="1.5" width="15" height="13" fill="#bfd8f0" stroke="#2c5d94" />
      <path d="M0 2h16" stroke="#2c5d94" strokeWidth="2" />
      <path d="M2 12l5-5M3 5l10 9M9 12l4-6" stroke="#2c5d94" />
      <path d="M5 11l3-3 2 2 3-4" stroke="#c33" fill="none" />
    </>
  ),
  list: (
    <>
      <rect x="1" y="1.5" width="14" height="13" fill="#c8c8c8" stroke="#6a6a6a" />
      <path d="M1 2.500h14M3 6h5M9 6h5M3 9h5M9 9h5M3 12h11" stroke="#6a6a6a" strokeWidth="1.2" />
    </>
  ),
  az: (
    <>
      <text x="5" y="7" fontSize="8" fontWeight="700" textAnchor="middle" fill="#1d4f91" fontFamily="Liberation Serif, serif">А</text>
      <text x="5" y="14" fontSize="8" fontWeight="700" textAnchor="middle" fill="#b22" fontFamily="Liberation Serif, serif">Я</text>
      <path d="M13 1v13M10.500 11l2.500 4 2.500-4" stroke="#222" fill="none" strokeWidth="1.3" />
    </>
  ),
  za: (
    <>
      <text x="5" y="7" fontSize="8" fontWeight="700" textAnchor="middle" fill="#b22" fontFamily="Liberation Serif, serif">Я</text>
      <text x="5" y="14" fontSize="8" fontWeight="700" textAnchor="middle" fill="#1d4f91" fontFamily="Liberation Serif, serif">А</text>
      <path d="M13 1v13M10.500 11l2.500 4 2.500-4" stroke="#222" fill="none" strokeWidth="1.3" />
    </>
  ),
  sigma: (
    <>
      <path d="M12 4V1.500H2L7 8l-5 6.500h10V12" stroke="#2361a8" strokeWidth="2" fill="none" />
      <circle cx="14" cy="8" r="1.3" fill="#b22" />
    </>
  ),
  calc: (
    <>
      <rect x=".8" y="2.5" width="14.5" height="12" rx="1" fill="#4f86c0" stroke="#1d4475" />
      <path d="M3 4.500h10v2H3z" fill="#fff" />
      <path d="M3 9h10M3 11h10M3 13h10" stroke="#fff" strokeDasharray="2 1" />
    </>
  ),
  book: (
    <>
      <path d="M.5 2.500q4-2 7.500 0 4-2 7.500 0v12q-4-2-7.500 0-4-2-7.500 0z" fill="#e8f1fa" stroke="#1d4475" strokeWidth="1.3" />
      <path d="M8 3v12M2 5h4M2 7.500h4M2 10h4M10 5h4M10 7.500h4M10 10h4" stroke="#3b6ea5" />
    </>
  ),
  pillar: (
    <>
      <path d="M2.500 5.500h9v2h-2v5h2v2h-9v-2h2v-5h-2z" fill="#dceaf6" stroke="#1d4475" strokeWidth="1.3" />
      <path d="M7 5l4-4h4" stroke="#666" fill="none" />
    </>
  ),
  merge1: (
    <>
      <rect x=".5" y=".5" width="15" height="15" fill="#fff" stroke="#2c5d94" />
      <path d="M8 1v4M8 11v4M1 4.500h14M1 11.500h14" stroke="#b33" />
      <path d="M1 8h5M10 8h5M4 6.500L6 8 4 9.500M12 6.500L10 8l2 1.500" stroke="#b33" fill="none" />
      <rect x="7" y="7" width="2" height="2" fill="#b33" />
    </>
  ),
  merge2: (
    <>
      <rect x=".5" y=".5" width="15" height="15" fill="#fff" stroke="#2c5d94" />
      <path d="M1 4.500h14M1 11.500h14M8 1v3M8 12v3" stroke="#b33" />
      <path d="M8 5v6" stroke="#2c8a5d" strokeDasharray="2 1" />
    </>
  ),
  merge3: (
    <>
      <rect x=".5" y=".5" width="15" height="15" fill="#fff" stroke="#2c5d94" />
      <path d="M1 4.500h14M1 11.500h14M8 1v3M8 12v3" stroke="#b33" />
      <path d="M8 5v6M2 8h3M11 8h3" stroke="#2c8a5d" strokeDasharray="2 1" />
    </>
  ),
  merge4: (
    <>
      <rect x=".5" y=".5" width="15" height="15" fill="#fff" stroke="#2c5d94" />
      <path d="M8 1v4M8 11v4M1 4.500h14M1 11.500h14" stroke="#b33" />
      <path d="M15 1L7 11" stroke="#f0b020" strokeWidth="2.5" />
      <path d="M7 9.500L5.500 12.500l3-1.500z" fill="#222" />
    </>
  ),
  colorbrush: (
    <>
      <path d="M15 1l-5 6" stroke="#2378c8" strokeWidth="2.5" />
      <path d="M10 5l2.500 3-4 4H2q4-1 4-5z" fill="#7a5048" stroke="#333" strokeWidth=".6" />
      <path d="M2 12h3v4H2z" fill="#e22" />
      <path d="M5 12h2v4H5z" fill="#fc0" />
      <path d="M7 12h2v4H7z" fill="#2b4" />
      <path d="M9 12h3v4H9z" fill="#24e" />
    </>
  ),
  alignbox: (
    <>
      <rect x="1" y=".5" width="14" height="15" fill="#f6faff" stroke="#3b73b0" />
      <path d="M4 5.500h8M4 8.500h8M5 11.500h6" stroke="#b33" />
    </>
  ),
  valign: (
    <>
      <rect x=".5" y="2.5" width="15" height="9" fill="#eef6ff" stroke="#3b73b0" />
      <path d="M4 5.500h8M4 8.500h8" stroke="#b33" />
    </>
  ),
  valigng: (
    <>
      <rect x=".5" y="2.5" width="15" height="9" fill="#e6e6e6" stroke="#888" />
      <path d="M4 5.500h8M4 8.500h5" stroke="#777" />
    </>
  ),
  borders: (
    <>
      <rect x="1" y=".5" width="14" height="15" fill="#dcecff" stroke="#3b73b0" />
      <path d="M8 2v12M2 8h12" stroke="#2c5d94" strokeDasharray="1.5 1.5" />
    </>
  ),
  /* status bar */
  bulb: (
    <>
      <circle cx="8" cy="5.5" r="5" fill="#b9bcc0" stroke="#9a9da1" />
      <path d="M5.500 9h5v3h-5z" fill="#b9bcc0" />
      <path d="M5.500 13h5M6.500 15h3" stroke="#7b7f84" strokeWidth="1.5" />
    </>
  ),
  nocursor: (
    <>
      <path d="M5 3v9l2-2 2 4" stroke="#222" fill="#fff" />
      <circle cx="8" cy="8" r="7" fill="none" stroke="#e04040" strokeWidth="1.6" />
      <path d="M3 13L13 3" stroke="#e04040" strokeWidth="1.6" />
    </>
  ),
  corner: (
    <>
      <path d="M0 0h16v16H0z" fill="#2f9fd8" />
      <path d="M3 16V8q0-5 5-5h8M8 16v-5q0-3 3-3h5" stroke="#e6f6ff" strokeWidth="1.6" fill="none" />
    </>
  ),
  gridi: (
    <>
      <path d="M1.500 2.500h12v12h-12z" fill="#d8eefa" stroke="#555" />
      <path d="M5 3v11M9 3v11M2 6h12M2 10h12" stroke="#2f9fd8" />
      <path d="M2 4l10 10H2z" fill="#b4c0ca" stroke="#333" />
    </>
  ),
  refreshg: (
    <>
      <path d="M3 7q1-5 6-4M13 9q-1 5-6 4" stroke="#2fa84a" strokeWidth="2.2" fill="none" />
      <path d="M0 6h6L3 10zM10 10h6l-3-4zM9 0v6l3-3zM7 10v6l-3-3z" fill="#2fa84a" />
    </>
  ),
  full: (
    <>
      <path d="M.5 4V1.500h3.500M12 1.500h3.500V4M15.500 12v2.500H12M4 14.500H.5V12" stroke="#333" fill="none" />
      <rect x="3" y="4" width="10" height="8" fill="#1a9fe0" stroke="#1b4f78" />
    </>
  ),
  gear: (
    <>
      <circle cx="8" cy="8" r="6.5" fill="none" stroke="#1287b8" strokeWidth="3" strokeDasharray="2.6 2.5" />
      <path d="M10.500 3.500a5 5 0 1 0 0 9" stroke="#1ca0d0" strokeWidth="3" fill="none" />
      <path d="M8 12l5-9" stroke="#0b3f66" strokeWidth="2" />
    </>
  ),
  split: (
    <>
      <rect x=".5" y="1.5" width="15" height="13" rx="1" fill="#fff" stroke="#444" />
      <path d="M2 5h12M2 11.500h12" stroke="#8ab4d8" strokeWidth="1.5" />
      <path d="M0 8.500h16" stroke="#222" />
    </>
  ),
  pin: <path d="M3.500 9.500h9M5.500 9.500v-7h5v7M9.500 3v6M8 10v4" stroke="#44618f" strokeWidth="1.2" fill="none" />,
  close: <path d="M3 3l10 10M13 3L3 13" stroke="#44618f" strokeWidth="1.5" />,
};

const Svg = styled.svg`
  display: block;
  flex: none;
`;

const Icon = ({ name, size = 16 }) => (
  <Svg width={size} height={size} viewBox="0 0 16 16" fill="none" aria-hidden="true">
    {icons[name]}
  </Svg>
);

const Defs = styled.svg`
  position: absolute;
  width: 0;
  height: 0;
`;

const gradients = [
  ["steel", "#dbe8f2", "#3f6f9c"],
  ["page", "#ffffff", "#cfd3d6"],
  ["cloudy", "#f2f2f2", "#9a9a9a"],
  ["gold", "#fff2b0", "#f0c050"],
  ["ball", "#8cc4f5", "#1d5fb8"],
  ["sky", "#ffffff", "#9fd3ea"],
  ["sky2", "#d9f1fc", "#4aa8e0"],
  ["dark", "#8a8a8a", "#111111"],
];

/* ---------- shared controls ---------- */

const ToolRow = styled.div`
  display: flex;
  height: 24px;
  padding-left: 2px;
  gap: 2px;
`;

const Strip = styled.div`
  display: flex;
  align-items: center;
  padding: 0 2px 0 7px;
  border-bottom: 1px solid #7aa5e0;
  border-radius: 3px;
  background: linear-gradient(#e6f0ff, #cfe1fb 60%, #bdd6fa);

  &::before {
    content: "";
    width: 2px;
    height: 15px;
    margin-left: -4px;
    margin-right: 3px;
    background: repeating-linear-gradient(#6f97cf 0 2px, transparent 2px 4px);
  }
`;

const VStrip = styled.div`
  display: flex;
  flex-direction: column;
  align-items: center;
  width: 24px;
  padding: 4px 0 2px;
  border-right: 1px solid #7aa5e0;
  border-radius: 3px;
  background: linear-gradient(90deg, #e6f0ff, #cfe1fb 60%, #b5d0f8);

  &:last-child {
    padding-bottom: 9px;
  }

  &::before {
    content: "";
    width: 15px;
    height: 2px;
    margin-bottom: 3px;
    background: repeating-linear-gradient(90deg, #6f97cf 0 2px, transparent 2px 4px);
  }
`;

const ToolButton = styled.button`
  display: flex;
  align-items: center;
  justify-content: center;
  flex: none;
  position: relative;
  width: ${(p) => p.$w || 21}px;
  height: 21px;
  padding: 0;
  border: 1px solid ${(p) => (p.$on ? "#c08a3a" : "transparent")};
  background: ${(p) => (p.$on ? "linear-gradient(#fbd79b, #ffc566)" : "none")};

  ${(p) =>
    p.$more &&
    css`
      &::after {
        content: "";
        position: absolute;
        right: 0;
        bottom: 0;
        border: 2px solid #2f8fe8;
        border-top-color: transparent;
        border-left-color: transparent;
      }
    `}
`;

const Sep = styled.span`
  flex: none;
  width: ${(p) => (p.$v ? "20px" : "2px")};
  height: ${(p) => (p.$v ? "2px" : "20px")};
  margin: ${(p) => (p.$v ? "3px 0" : "0 3px")};
  background: linear-gradient(${(p) => (p.$v ? "180deg" : "90deg")}, #8f959d 50%, #fff 50%);
`;

const Tools = ({ list, v, w }) =>
  list.split(" ").map((item, i) => {
    if (item === "|") return <Sep key={i} $v={v} />;
    const name = item.replace(/[*!]/, "");
    return (
      <ToolButton
        key={i}
        type="button"
        aria-label={name}
        $w={w}
        $more={item.includes("*")}
        $on={item.includes("!")}
      >
        <Icon name={name} />
      </ToolButton>
    );
  });

const StyleSelect = styled.select`
  appearance: none;
  flex: none;
  width: ${(p) => p.$w}px;
  height: 21px;
  margin-right: 4px;
  border: 1px solid #fff;
  border-top: 2px solid #808080;
  border-left: 2px solid #808080;
  border-radius: 0;
  background: #efefef;
`;

const Combo = ({ label, w }) => (
  <StyleSelect aria-label={label} $w={w}>
    <option></option>
  </StyleSelect>
);

const Track = styled.div`
  display: flex;
  flex: ${(p) => p.$grow || "none"};
  flex-direction: ${(p) => (p.$v ? "column" : "row")};
  ${(p) => (p.$v ? "width" : "height")}: 17px;
  background: #efefef;
`;

const TrackArrow = styled.button`
  display: flex;
  align-items: center;
  justify-content: center;
  flex: none;
  width: 17px;
  height: 17px;
  padding: 0;
  border: 0;
  background: #f1f1f1;
`;

const Gap = styled.span`
  flex: ${(p) => p.$n} 1 0;
`;

const Thumb = styled.span`
  display: flex;
  align-items: center;
  justify-content: center;
  flex: 0 0 ${(p) => p.$len}px;
  border: 1px solid #989898;
  border-radius: 2px;
  background: linear-gradient(${(p) => (p.$v ? "90deg" : "180deg")}, #f6f6f6, #e4e4e4 50%, #cfcfcf 51%, #dadada);

  &::after {
    content: "";
    width: ${(p) => (p.$v ? "8px" : "7px")};
    height: ${(p) => (p.$v ? "7px" : "8px")};
    background: repeating-linear-gradient(${(p) => (p.$v ? "180deg" : "90deg")}, #555 0 1px, #fff 1px 2px, transparent 2px 3px);
  }
`;

const arrows = {
  up: "M0 6l4-4 4 4z",
  down: "M0 2l4 4 4-4z",
  left: "M6 0L2 4l4 4z",
  right: "M2 0l4 4-4 4z",
};

const Arrow = ({ dir, size = 8, color = "#333" }) => (
  <Svg width={size} height={size} viewBox="0 0 8 8" aria-hidden="true">
    <path d={arrows[dir]} fill={color} />
  </Svg>
);

const ScrollBar = ({ v, before, len, after, grow }) => (
  <Track $v={v} $grow={grow}>
    <TrackArrow type="button" aria-label="back">
      <Arrow dir={v ? "up" : "left"} size={7} />
    </TrackArrow>
    <Gap $n={before} />
    {len ? <Thumb $v={v} $len={len} /> : null}
    <Gap $n={after} />
    <TrackArrow type="button" aria-label="forward">
      <Arrow dir={v ? "down" : "right"} size={7} />
    </TrackArrow>
  </Track>
);

/* ---------- main window ---------- */

const Page = styled.div`
  display: flex;
  flex-direction: column;
  height: 100vh;
`;

const TitleBar = styled.header`
  display: flex;
  align-items: center;
  flex: none;
  height: 22px;
  gap: 5px;
  border-bottom: 1px solid #10284a;
  background:
    radial-gradient(ellipse 24px 13px at 38px 22px, #fff, transparent),
    radial-gradient(ellipse 26px 16px at 115px 24px, #fff, transparent),
    radial-gradient(ellipse 26px 16px at 722px 20px, #fff 40%, transparent),
    radial-gradient(ellipse 20px 12px at 949px 20px, #fff 40%, transparent),
    linear-gradient(90deg, #5d86bf 0, #6d93c6 300px, #2a65ae 400px, #1a57a3 620px, #2a67b5 820px, #155ca9 1100px, #2463a8 1500px, #164c86 1620px, #2d62a0 1700px, #1c4c82 1800px, #456f9e);
`;

const TitleText = styled.h1`
  margin: 0;
  font-family: Roboto, sans-serif;
  font-size: 12px;
  font-weight: 400;
  text-shadow: 0 0 6px #fff, 0 0 10px #dfeaff, 0 0 12px #dfeaff;
`;

const WinButtons = styled.div`
  display: flex;
  align-self: flex-start;
  height: 19px;
  margin-left: auto;
  margin-right: 3px;
  border: 1px solid #1c3b5f;
  border-top: 0;
  border-radius: 0 0 5px 5px;
  overflow: hidden;
  box-shadow: 0 0 0 1px rgba(255, 255, 255, 0.4);
`;

const WinButton = styled.button`
  display: flex;
  align-items: center;
  justify-content: center;
  width: ${(p) => p.$w}px;
  padding: 0;
  border: 0;
  border-right: 1px solid ${(p) => (p.$dark ? "#39506b" : "#7e9dc0")};
  background: ${(p) => p.$bg || "linear-gradient(#5a7ca4, #33587f)"};

  &:last-child {
    border-right: 0;
  }
`;

const winGlyphs = {
  min: <rect x="1.5" y="8" width="11" height="3.5" fill="#fff" stroke="#45566b" />,
  max: (
    <path d="M4 1h8v8H4zM2 4h8v8H2zM5 7h2v2H5z" fill="#fff" stroke="#45566b" fillRule="evenodd" />
  ),
  one: <path d="M2 2h11v9H2zM5.500 5h4v3h-4z" fill="#fff" stroke="#45566b" fillRule="evenodd" />,
  close: (
    <g>
      <path d="M3 2.500l8 8.500M11 2.500L3 11" stroke="#45566b" strokeWidth="4.5" />
      <path d="M3 2.500l8 8.500M11 2.500L3 11" stroke="#fff" strokeWidth="2.8" />
    </g>
  ),
};

const WinGlyph = ({ name }) => (
  <Svg width="14" height="14" viewBox="0 0 14 14" aria-hidden="true">
    {winGlyphs[name]}
  </Svg>
);

const MenuBar = styled.nav`
  display: flex;
  align-items: center;
  flex: none;
  height: 26px;
  gap: 14px;
  margin-bottom: 1px;
  padding-left: 4px;

  &::before {
    content: "";
    width: 2px;
    height: 15px;
    margin-right: -4px;
    background: repeating-linear-gradient(#8fb0dd 0 2px, transparent 2px 4px);
  }
`;

const MenuItem = styled.button`
  padding: 0;
  border: 0;
  background: none;
  font-size: 11px;
  line-height: 16px;
  color: #1c3f8c;
`;

const Work = styled.main`
  display: flex;
  flex: 1;
  min-height: 0;
`;

const Center = styled.div`
  display: flex;
  flex-direction: column;
  flex: 1;
  min-width: 0;
`;

const Columns = styled.div`
  display: flex;
  flex: 1;
  min-height: 0;
  gap: 5px;
`;

const Side = styled.div`
  display: flex;
  flex-direction: column;
  flex: none;
  width: 25px;
  padding-left: 1px;
`;

const Dock = styled.section`
  display: flex;
  flex-direction: column;
  flex: none;
  width: 470px;
`;

const DockBox = styled.div`
  display: flex;
  flex-direction: column;
  flex: 1;
  min-height: 0;
  border: 1px solid #a9c8ee;
  background: #e3edf8;
`;

const DockHead = styled.div`
  display: flex;
  align-items: center;
  flex: none;
  height: 19px;
  gap: 3px;
  padding: 0 0 0 3px;
  background: #b7cfe9;
  color: #1c4d94;
`;

const DockTitle = styled.h2`
  margin: 0 auto 0 0;
  font-size: 11px;
  font-weight: 400;
  line-height: 18px;
`;

const SmallButton = styled.button`
  display: flex;
  align-items: center;
  justify-content: center;
  width: 16px;
  height: 16px;
  padding: 0;
  border: 0;
  background: none;
`;

const DockBody = styled.div`
  display: flex;
  flex-direction: column;
  flex: 1;
  min-height: 0;
  margin: 2px 3px 3px;
  background: #f0f0f0;
`;

const DockTools = styled.div`
  display: flex;
  align-items: center;
  flex: none;
  height: 25px;
`;

const Tree = styled.ul`
  && {
    flex: 1;
    min-height: 0;
    margin: 0 1px 1px;
    border-top: 1px solid #828790;
    border-left: 1px solid #828790;
    background: #fff;
    font-family: "Liberation Sans", Arial, sans-serif;
    font-size: 11px;
    line-height: 16px;
    overflow: hidden;
  }
`;

const Row = styled.div`
  display: flex;
  align-items: center;
  height: 16px;
  gap: 4px;
  padding-left: ${(p) => p.$pad || 0}px;
  white-space: nowrap;
`;

const Dots = styled.span`
  width: ${(p) => p.$w}px;
  height: 1px;
  margin-right: -5px;
  background: repeating-linear-gradient(90deg, #888 0 1px, transparent 1px 2px);
`;

const Branch = styled.ul`
  && {
    margin-left: 11px;
    padding-left: 18px;
    background:
      repeating-linear-gradient(#888 0 1px, transparent 1px 2px) 0 0 / 1px 100% no-repeat,
      repeating-linear-gradient(#888 0 1px, transparent 1px 2px) 19px 0 / 1px calc(100% - 8px) no-repeat;
  }
`;

const Leaf = styled.span`
  display: flex;
  align-items: center;
  height: 16px;
  gap: 6px;
  padding: 0 4px 0 2px;
  border-radius: 2px;
  ${(p) =>
    p.$on &&
    css`
      background: linear-gradient(#fafafa, #e8e8e8);
      box-shadow: 0 0 0 1px #d9d9d9 inset;
    `}
`;

const DockTabs = styled.div`
  display: flex;
  flex: none;
  height: 28px;
  padding-left: 1px;
`;

const DockTab = styled.button`
  height: 21px;
  padding: 1px 5px 0;
  margin-right: ${(p) => (p.$on ? 1 : 0)}px;
  border: 1px solid ${(p) => (p.$on ? "#8db2e3" : "transparent")};
  border-top: 0;
  border-radius: 0 0 4px 4px;
  background: ${(p) => (p.$on ? "linear-gradient(#d8e8fc, #fff)" : "none")};
  font-size: 11px;
  line-height: 18px;
  color: #1c3f8c;
`;

const Doc = styled.section`
  display: flex;
  flex-direction: column;
  flex: 1;
  min-width: 0;
  padding-bottom: 6px;
`;

const DocTabs = styled.div`
  display: flex;
  align-items: flex-end;
  flex: none;
  height: 20px;
  padding: 0 5px 0 13px;
  border-bottom: 1px solid #a9c8ee;
  background: linear-gradient(#aed0fd, #dceaff);

  > :last-child {
    margin-left: auto;
    align-self: center;
  }
`;

const DocTab = styled.button`
  display: flex;
  align-items: center;
  position: relative;
  isolation: isolate;
  height: 17px;
  gap: 8px;
  padding: 0 ${(p) => (p.$on ? 4 : 0)}px 0 13px;
  border: 0;
  background: none;
  font-family: ${(p) => (p.$on ? "Roboto, sans-serif" : "inherit")};
  font-size: 11px;
  font-weight: ${(p) => (p.$on ? 700 : 400)};
  color: #1a2f78;

  &::before,
  &::after {
    content: "";
    position: absolute;
    z-index: -1;
    inset: 0 0 0 40%;
    border: 1px solid #a9c8ee;
    border-left: 0;
    border-bottom: 0;
    background: ${(p) => (p.$on ? "#fff" : "#dceafd")};
  }

  &::before {
    inset: 0 50% 0 0;
    border: 1px solid #a9c8ee;
    border-right: 0;
    border-bottom: 0;
    transform: skewX(-40deg);
  }
`;

const DocFrame = styled.div`
  display: flex;
  flex-direction: column;
  flex: 1;
  min-height: 0;
  padding: 1px 4px 3px 3px;
  background: #fff;
`;

const DocInner = styled.div`
  display: flex;
  flex-direction: column;
  flex: 1;
  min-height: 0;
  border-top: 2px solid #6d6d6d;
  border-left: 2px solid #6d6d6d;
`;

const CanvasRow = styled.div`
  display: flex;
  flex: 1;
  min-height: 0;
`;

const Canvas = styled.div`
  flex: 1;
  min-width: 0;
  position: relative;
  overflow: hidden;
  background: #c0c0c0;
`;

const Sketch = styled.table`
  position: absolute;
  left: 45px;
  top: 153px;
  width: 748px;
  height: 513px;
  table-layout: fixed;
  border-collapse: collapse;
  font-family: Roboto, "Open Sans", sans-serif;
  font-size: 15px;
  font-style: italic;
  line-height: 16px;
  color: #f0f;

  td,
  th {
    height: 33px;
    padding: 0;
    border: 1px solid #f0f;
    font-weight: 300;
    text-align: center;
    vertical-align: middle;
  }
`;

const Marks = styled.svg`
  position: absolute;
  left: 0;
  top: 0;
`;

const SheetBar = styled.div`
  display: flex;
  align-items: center;
  flex: none;
  height: 20px;
  border-top: 1px solid #808080;
  background: #f0f0f0;
`;

const SheetTab = styled.button`
  position: relative;
  isolation: isolate;
  align-self: flex-start;
  height: 17px;
  margin-left: ${(p) => (p.$on ? 5 : 0)}px;
  padding: 0 6px;
  border: 0;
  background: none;
  font-family: "Liberation Sans", Arial, sans-serif;
  font-size: 12px;
  line-height: 14px;
  font-weight: ${(p) => (p.$on ? 700 : 400)};

  &::before,
  &::after {
    content: "";
    position: absolute;
    z-index: -1;
    top: 0;
    bottom: 0;
    border-bottom: 1px solid #444;
    background: ${(p) => (p.$on ? "#fff" : "#f0f0f0")};
  }

  &::before {
    left: 1px;
    right: 45%;
    border-left: 1px solid #444;
    transform: skewX(20deg);
  }

  &::after {
    left: 45%;
    right: 1px;
    border-right: 1px solid #444;
    transform: skewX(-20deg);
  }
`;

const Spring = styled.span`
  flex: ${(p) => p.$n || 1};
`;

const Grip = styled.span`
  width: 17px;
  height: 17px;
  background: repeating-linear-gradient(135deg, transparent 0 2px, #a0a0a0 2px 3px) 4px 4px / 13px 13px no-repeat;
  clip-path: polygon(100% 20%, 100% 100%, 20% 100%);
`;

/* ---------- command line ---------- */

const Command = styled.section`
  display: flex;
  flex: none;
  height: 70px;
`;

const CommandHead = styled.div`
  display: flex;
  flex-direction: column;
  align-items: center;
  flex: none;
  width: 18px;
  gap: 3px;
  padding-top: 2px;
  border-left: 1px solid #a9c8ee;
  background: #b7cfe9;
`;

const SideText = styled.span`
  writing-mode: vertical-rl;
  transform: rotate(180deg);
  height: 31px;
  overflow: hidden;
  font-size: 11px;
  line-height: 14px;
  color: #1c4d94;
`;

const CommandBody = styled.div`
  display: flex;
  flex-direction: column;
  flex: 1;
  min-width: 0;
  border-left: 1px solid #6d6d6d;
  font-family: "DejaVu Sans Mono", monospace;
  font-size: 12px;
  line-height: 14px;
`;

const History = styled.div`
  display: flex;
  height: 54px;
  border-top: 2px solid #6d6d6d;
  border-bottom: 1px solid #6d6d6d;
  background: #f0f0f0;
`;

const Log = styled.pre`
  display: flex;
  flex-direction: column;
  justify-content: flex-end;
  flex: 1;
  margin: 0;
  padding-bottom: 1px;
  font: inherit;
  overflow: hidden;
`;

const Prompt = styled.label`
  display: flex;
  align-items: center;
  flex: 1;
  background: #fff;

  input {
    flex: 1;
    padding: 0;
    border: 0;
    outline: 0;
    background: none;
  }
`;

/* ---------- status bar ---------- */

const Status = styled.footer`
  display: flex;
  align-items: center;
  flex: none;
  height: 24px;
  gap: 1px;
  padding: 0 1px 0 2px;
  border-top: 1px solid #5b87c4;
  border-bottom: 2px solid #3c5878;
  background: linear-gradient(#d5e5fb, #c3daf8 45%, #aecbf2 50%, #c2d9f8);
`;

const Coords = styled.span`
  width: 212px;
  font-size: 11px;
  color: #1c3f8c;
`;

const Toggle = styled.button`
  display: flex;
  align-items: center;
  justify-content: center;
  flex: none;
  height: 20px;
  width: ${(p) => p.$w}px;
  padding: 0;
  border: 1px solid #7f96b4;
  background: ${(p) =>
    p.$on
      ? "linear-gradient(#fddba5, #fbc878 40%, #f8b24c 50%, #fdd48a)"
      : "linear-gradient(#fdfeff, #e9f1fb 45%, #d5e4f6 50%, #e6f0fc)"};
  font-family: Roboto, sans-serif;
  font-size: 12px;
  white-space: nowrap;
  color: ${(p) => (p.$on ? "#16306e" : "#000")};
`;

/* ---------- table editor window ---------- */

const Window = styled.section`
  position: absolute;
  left: 988px;
  top: 274px;
  display: flex;
  flex-direction: column;
  width: 621px;
  height: 497px;
  padding: 0 6px 8px;
  border: 1px solid #20262e;
  border-radius: 7px;
  box-shadow: 0 0 0 1px rgba(255, 255, 255, 0.6) inset, 2px 4px 14px 4px rgba(0, 0, 0, 0.65);
  background:
    linear-gradient(90deg, #c5d1de 0, #c9d3df 150px, #8aa4c1 200px, #8ba6c4 420px, #aab7c8 520px, #a3b2c4) 0 0 / 100% 29px no-repeat,
    linear-gradient(#b9c7d8, #d0d6e4 140px, #8fabcb 150px, #93aecd);
  font-family: Roboto, sans-serif;
`;

const WindowHead = styled.div`
  display: flex;
  flex: none;
  height: 28px;
  gap: 5px;

  > svg {
    margin: 6px 0 0 1px;
  }

  ${WinButtons} {
    margin-right: 0;
  }
`;

const WindowTitle = styled.h2`
  margin: 5px 0 0;
  font-size: 12px;
  font-weight: 400;
  line-height: 18px;
`;

const WindowBody = styled.div`
  display: flex;
  flex-direction: column;
  flex: 1;
  min-height: 0;
  border: 1px solid #3f4a57;
  background: #f0f0f0;
  overflow: hidden;
`;

const WindowMenu = styled.nav`
  display: flex;
  align-items: center;
  flex: none;
  height: 19px;
  gap: 13px;
  padding-left: 5px;
  background: linear-gradient(#fff, #e6eaf5 40%, #d5dbee 50%, #e2e6f4);

  button {
    font-size: 12px;
    color: #000;
  }
`;

const WindowTools = styled.div`
  display: flex;
  align-items: center;
  flex: none;
  height: ${(p) => p.$h}px;
`;

const DropButton = styled.button`
  display: flex;
  align-items: center;
  justify-content: center;
  flex: none;
  width: 14px;
  height: 19px;
  padding: 0;
  border: 0;
  background: none;
`;

const Pressed = styled.span`
  display: flex;
  flex: none;
  align-items: center;
  height: 20px;
  border: 1px solid #6b6b6b;
  border-radius: 3px;
  background: #dcdcdc;

  button:first-child {
    border-right: 1px solid #8a8a8a;
  }
`;

const Picker = styled.label`
  display: flex;
  align-items: center;
  flex: none;
  width: ${(p) => p.$w}px;
  height: 23px;
  gap: 2px;
  margin-left: 3px;
  padding: 0 5px 0 4px;
  border: 1px solid #e3e9ef;
  background: #fff;

  select {
    appearance: none;
    flex: 1;
    min-width: 0;
    padding: 0;
    border: 0;
    background: none;
    font-size: 12px;
  }
`;

const GridFrame = styled.div`
  display: flex;
  flex: 1;
  min-height: 0;
  margin: 1px 2px 0 1px;
  border-top: 2px solid #75797e;
  background: #fafafa;
`;

const GridSide = styled.div`
  display: flex;
  flex-direction: column;
  flex: 1;
  min-width: 0;
`;

const GridTable = styled.table`
  width: calc(100% - 2px);
  flex: none;
  table-layout: fixed;
  border-spacing: 0;
  font-family: "Liberation Sans", Arial, sans-serif;
  font-size: 11px;
  line-height: 13px;
  color: #0c1e3c;

  td,
  th {
    padding: 0;
    text-align: center;
    vertical-align: middle;
    font-weight: 400;
  }
`;

const HeadCell = styled.th`
  height: 18px;
  border-right: 1px solid #8ba6c1;
  border-bottom: 2px solid #8ba6c1;
  background: ${(p) => (p.$on ? "linear-gradient(#7dbcfb, #3d9bfa)" : "linear-gradient(#cfe4fa, #b9d7f5)")};
  color: ${(p) => (p.$on ? "#e3f1ff" : "#0c1e3c")};
`;

const Corner = styled.th`
  border-bottom: 2px solid #8ba6c1;
  background: #f4f4f4;
`;

const NumCell = styled.th`
  height: 25px;
  border-right: 1px solid #8a8f96;
  border-bottom: 1px solid #8ba6c1;
  background: #bedcf9;
`;

const Blank = styled.td`
  border-right: 1px solid #8ba6c1;
  background: #fafafa;
`;

const Cell = styled.td`
  border-right: 1px solid #8ba6c1;
  border-bottom: 1px solid #8ba6c1;
  background: #cce6ff;
`;

const GridClip = styled.div`
  display: flex;
  flex-direction: column;
  justify-content: flex-end;
  flex: none;
  height: 332px;
  overflow: hidden;
`;

const GridTail = styled.div`
  flex: 1;
  width: 25px;
  border-right: 1px solid #8a8f96;
  background: #f0f0f0;
`;

const GridFoot = styled.div`
  display: flex;
  flex: none;
  height: 17px;
  background: #f0f0f0;
`;

const GridScroll = styled.div`
  display: flex;
  flex-direction: column;
  flex: none;
  background: #efefef;
`;

/* ---------- data ---------- */

const menu = ["Файл", "Правка", "Вид", "Вставка", "Формат", "Сервис", "Черчение", "Размеры", "Редактирование", "Растр", "Механика", "Справка"];
const windowMenu = ["Файл", "Правка", "Вид", "Столбцы", "Строки", "Ячейка", "Разделы", "Помощь"];
const dockTabs = ["Проекты", "Альбомы", "TDMS", "Объекты", "База элементов", "Выбор", "Свойства"];
const sheets = ["Модель", "A4", "A3", "A2", "A1", "A0"];

const tree = [
  { name: "Избранное", icon: "star" },
  { name: "Арматура трубопроводов" },
  { name: "Валы" },
  { name: "Группы" },
  { name: "Детали крепления" },
  { name: "Дополнительные базы" },
  { name: "Звенья" },
  { name: "Зубчатые колеса" },
  { name: "Маркеры" },
  { name: "Оси" },
  { name: "Плитка" },
  { name: "Примеры" },
  { name: "Профили" },
  { name: "Пружины" },
  {
    name: "Развёртки",
    items: [
      "Бункер несимметричный",
      "Бункер симметричный",
      "Колено постоянного сечения",
      "ПП с окружн. на квадр",
      "ПП с окружн. на прямоуг",
      "ПП с прямоуг. на окружн",
      "Пересечение отвода с трубой",
      "Пересечение отвода с трубой под углом",
      "Переход конусный",
      "Развёртка сферы",
      "Цилиндр усечённый",
    ],
  },
  { name: "Расчеты" },
  { name: "Сварные соединения" },
  { name: "Спецификации" },
  { name: "Таблицы" },
  { name: "Технологические эскизы" },
  { name: "Уплотнения" },
  { name: "Условные графические обозначения" },
  { name: "Шаблоны" },
  { name: "Шаблоны форматов" },
  { name: "Электродвигатели" },
  { name: "Элементы станочных приспособлений" },
];

const modes = [
  ["ШАГ", 32],
  ["СЕТКА", 40],
  ["оПРИВЯЗКА", 71, true],
  ["ОТС-ОБЪЕКТ", 74, true],
  ["ОТС-ПОЛЯР", 71],
  ["ОРТО", 38, true],
  ["ВЕС", 29, true],
  ["ШТРИХОВКА", 74, true],
];

// row number, A, B, D, E, F, G
const rows = [
  [4, "6; 7", "", "16", "–", "0,4", "0,2"],
  [5, "8; 9", "", "20", "–", "4,6", "0,4"],
  [6, "10; 11", "", "23", "20", "0,6", "0,4"],
  [7, "12; 14", "", "30", "25", "1", "0,6"],
  [8, "16; 18", "19", "40", "28", "1", "0,6"],
  [9, "20;22", "24", "50", "36", "1,6", "1"],
  [10, "25;28", "–", "60", "42", "1,6", "1"],
  [11, "", "30", "80", "58", "2", "1,6"],
  [12, "32;36", "38", "80", "58", "2", "1,6"],
  [13, "40;45", "42;48", "110", "82", "2", "1,6"],
  [14, "50", "", "", "", "2,5", ""],
  [15, "55", "53", "110", "82", "", "2"],
];

const sketchLabels = { 6: "10, 11", 8: "16, 18", 12: "32,36", 13: "40,45" };

const columns = (
  <colgroup>
    <col style={{ width: 25 }} />
    <col style={{ width: 4 }} />
    <col span="7" />
  </colgroup>
);

/* ---------- parts ---------- */

const ElementTree = () => {
  const [selected, setSelected] = useState("ПП с окружн. на квадр");

  return (
    <Tree>
      <Row $pad={4}>
        <Icon name="root" />
        База элементов
      </Row>
      {tree.map((group) => (
        <li key={group.name}>
          <Row $pad={8}>
            <Svg width="8" height="9" viewBox="0 0 8 9" fill="none" aria-hidden="true">
              {group.items ? (
                <path d="M7 1v6H1z" fill="#333" />
              ) : (
                <path d="M1.500.5v8l5-4z" fill="#fff" stroke="#a5a5a5" />
              )}
            </Svg>
            <Dots $w={3} />
            <Icon name={group.icon || "folder"} />
            {group.name}
          </Row>
          {group.items && (
            <Branch>
              {group.items.map((name) => (
                <li key={name} onClick={() => setSelected(name)}>
                  <Row $pad={2}>
                    <Dots $w={10} />
                    <Leaf $on={name === selected}>
                      <Icon name="part" size={14} />
                      {name}
                    </Leaf>
                  </Row>
                </li>
              ))}
            </Branch>
          )}
        </li>
      ))}
    </Tree>
  );
};

const SketchTable = () => (
  <Sketch>
    <tbody>
      <tr>
        <th colSpan="2">Диаметр d</th>
        <th rowSpan="3">
          Поле
          <br />
          допусков
        </th>
        <th colSpan="2">Длина L</th>
        <th rowSpan="3"></th>
        <th rowSpan="3"></th>
      </tr>
      <tr>
        <th rowSpan="2">Ряд 1</th>
        <th rowSpan="2">Ряд 2</th>
        <th colSpan="2">Исполнение</th>
      </tr>
      <tr>
        <th>1</th>
        <th></th>
      </tr>
      {rows.map(([n, a, b, d, e, , g]) => (
        <tr key={n}>
          <td>{sketchLabels[n] || a}</td>
          <td>{b.replace(";", ",")}</td>
          {n === 4 && <td rowSpan="8">j6</td>}
          {n > 11 && <td></td>}
          <td>{d}</td>
          <td>{n === 15 && e}</td>
          <td></td>
          <td>{n === 15 && g}</td>
        </tr>
      ))}
    </tbody>
  </Sketch>
);

const Drawing = () => (
  <Canvas>
    <SketchTable />
    <Marks width="600" height="813" viewBox="505 144 600 813" fill="none" stroke="#000" aria-hidden="true">
      <path d="M870.500 279v18M822 326.500h96" />
      <path d="M870.500 297v78" stroke="#2db82d" />
      <path d="M540.500 897.500h24v24h-24zM552.500 897v-103M544.500 822.500h16l-8-29z" />
      <path d="M565 909.500h103M639.500 901.500v16l29-8z" />
      <path d="M546.500 764l6 6 6-6M552.500 770v6M685 903l12 12M697 903l-12 12" />
    </Marks>
  </Canvas>
);

const Document = () => (
  <Doc>
    <DocTabs>
      <DocTab type="button">Без имени0*</DocTab>
      <DocTab type="button" $on>
        Технологический эскиз.dwg*
        <Icon name="close" size={12} />
      </DocTab>
      <Arrow dir="down" size={10} color="#3f6cb0" />
    </DocTabs>
    <DocFrame>
      <DocInner>
        <CanvasRow>
          <Drawing />
          <ScrollBar v before={379} len={52} after={348} />
        </CanvasRow>
        <SheetBar>
          <TrackArrow type="button" aria-label="previous">
            <Arrow dir="left" size={7} />
          </TrackArrow>
          <TrackArrow type="button" aria-label="next">
            <Arrow dir="right" size={7} />
          </TrackArrow>
          {sheets.map((name, i) => (
            <SheetTab key={name} type="button" $on={i === 0}>
              {name}
            </SheetTab>
          ))}
          <Spring $n={42} />
          <Icon name="split" size={18} />
          <ScrollBar grow={70} before={226} len={86} after={348} />
          <Grip />
        </SheetBar>
      </DocInner>
    </DocFrame>
  </Doc>
);

const CommandLine = () => (
  <Command>
    <CommandHead>
      <SmallButton type="button" aria-label="close">
        <Icon name="close" size={12} />
      </SmallButton>
      <SmallButton type="button" aria-label="pin">
        <Icon name="pin" size={14} />
      </SmallButton>
      <SideText>Коман</SideText>
    </CommandHead>
    <CommandBody>
      <History>
        <Log>{"mctable - таблицы\nКоманда: DEdit\n\nКоманда: DEdit"}</Log>
        <ScrollBar v before={1} after={1} />
      </History>
      <Prompt>
        Команда:
        <input type="text" />
      </Prompt>
    </CommandBody>
  </Command>
);

const StatusBar = () => (
  <Status>
    <Coords>321.1384,-138.0009,0.0000</Coords>
    {modes.map(([name, w, on]) => (
      <Toggle key={name} type="button" $w={w} $on={on}>
        {name}
      </Toggle>
    ))}
    <Sep />
    <Spring />
    <Sep />
    {["bulb", "nocursor", "corner", "gridi"].map((name) => (
      <Toggle key={name} type="button" aria-label={name} $w={21} $on={name === "nocursor"}>
        <Icon name={name} />
      </Toggle>
    ))}
    <Toggle type="button" $w={90}>
      M1:2
    </Toggle>
    {["hand", "lens", "zoomwin", "zoomall", "refreshg", "full"].map((name) => (
      <Toggle key={name} type="button" aria-label={name} $w={21}>
        <Icon name={name} />
      </Toggle>
    ))}
  </Status>
);

const Drop = () => (
  <DropButton type="button" aria-label="more">
    <Arrow dir="down" size={8} color="#000" />
  </DropButton>
);

const EditorGrid = () => (
  <GridFrame>
    <GridSide>
      <GridTable>
        {columns}
        <thead>
          <tr>
            <Corner colSpan="2"></Corner>
            {["A", "B", "C", "D", "E", "F", "G"].map((name, i) => (
              <HeadCell key={name} $on={i < 2}>
                {name}
              </HeadCell>
            ))}
          </tr>
        </thead>
      </GridTable>
      <GridClip>
        <GridTable style={{ height: 356 }}>
          {columns}
          <tbody>
            <tr>
              <NumCell></NumCell>
              <Blank></Blank>
              <Cell rowSpan="2">Ряд 1</Cell>
              <Cell rowSpan="2">Ряд 2</Cell>
              <Cell rowSpan="2"></Cell>
              <Cell colSpan="2"></Cell>
              <Cell rowSpan="2"></Cell>
              <Cell rowSpan="2"></Cell>
            </tr>
            <tr>
              <NumCell>3</NumCell>
              <Blank></Blank>
              <Cell>1</Cell>
              <Cell>2</Cell>
            </tr>
            {rows.map(([n, a, b, ...rest]) => (
              <tr key={n}>
                <NumCell>{n}</NumCell>
                <Blank></Blank>
                <Cell>{a}</Cell>
                <Cell>{b}</Cell>
                {n === 4 && <Cell rowSpan="8">j6</Cell>}
                {n > 11 && <Cell></Cell>}
                {rest.map((text, i) => (
                  <Cell key={i}>{text}</Cell>
                ))}
              </tr>
            ))}
          </tbody>
        </GridTable>
      </GridClip>
      <GridTail />
      <GridFoot>
        <ScrollBar grow={1} before={2} len={520} after={30} />
      </GridFoot>
    </GridSide>
    <GridScroll>
      <ScrollBar v grow={1} before={43} len={286} after={9} />
      <Grip />
    </GridScroll>
  </GridFrame>
);

const TableEditor = () => (
  <Window>
    <WindowHead>
      <Icon name="gear" size={15} />
      <WindowTitle>Редактирование таблицы</WindowTitle>
      <WinButtons>
        <WinButton type="button" aria-label="minimize" $dark $w={28} $bg="linear-gradient(#c3d0df, #8fa5be)">
          <WinGlyph name="min" />
        </WinButton>
        <WinButton type="button" aria-label="maximize" $dark $w={27} $bg="linear-gradient(#c3d0df, #8fa5be)">
          <WinGlyph name="one" />
        </WinButton>
        <WinButton type="button" aria-label="close" $dark $w={46} $bg="linear-gradient(#e0a396, #c65a48 45%, #b02a17 50%, #cf5a3c)">
          <WinGlyph name="close" />
        </WinButton>
      </WinButtons>
    </WindowHead>
    <WindowBody>
      <WindowMenu>
        {windowMenu.map((name) => (
          <MenuItem key={name} type="button">
            {name}
          </MenuItem>
        ))}
      </WindowMenu>
      <WindowTools $h={23}>
        <Tools w={23} list="folder" />
        <Drop />
        <Tools w={23} list="disk" />
        <Drop />
        <Tools
          w={23}
          list="| xls1 xls2 link | eye | scissors copyblue clipboard | undog redog | adown aup aleft aright | chart list az za sigma | calc book pillar"
        />
      </WindowTools>
      <WindowTools $h={24}>
        <Tools w={23} list="merge1 merge2 merge3 merge4 | colorbrush" />
        <Pressed>
          <Tools list="alignbox" />
          <Drop />
        </Pressed>
        <Tools w={23} list="valign" />
        <Drop />
        <Tools w={23} list="valigng" />
        <Drop />
        <Pressed>
          <Tools list="borders" />
          <Drop />
        </Pressed>
        <Picker $w={106}>
          <Svg width="12" height="12" aria-hidden="true">
            <rect width="12" height="12" />
          </Svg>
          <select aria-label="Цвет">
            <option>По объекту</option>
          </select>
          <Arrow dir="down" color="#000" />
        </Picker>
        <Picker $w={133}>
          <Svg width="39" height="12" aria-hidden="true">
            <path d="M0 6.500h39" stroke="#000" />
          </Svg>
          <select aria-label="Тип линии">
            <option>По объекту</option>
          </select>
          <Arrow dir="down" color="#000" />
        </Picker>
      </WindowTools>
      <EditorGrid />
    </WindowBody>
  </Window>
);

const App = () => (
  <>
    <GlobalStyle />
    <Defs aria-hidden="true">
      <defs>
        {gradients.map(([id, from, to]) => (
          <linearGradient key={id} id={id} x1="0" y1="0" x2="1" y2="1">
            <stop offset="0" stopColor={from} />
            <stop offset="1" stopColor={to} />
          </linearGradient>
        ))}
      </defs>
    </Defs>
    <Page>
      <TitleBar>
        <Icon name="gear" />
        <TitleText>nanoCAD Механика 5 - не для коммерческого использования</TitleText>
        <WinButtons>
          <WinButton type="button" aria-label="minimize" $w={28}>
            <WinGlyph name="min" />
          </WinButton>
          <WinButton type="button" aria-label="restore" $w={27}>
            <WinGlyph name="max" />
          </WinButton>
          <WinButton type="button" aria-label="close" $w={47}>
            <WinGlyph name="close" />
          </WinButton>
        </WinButtons>
      </TitleBar>
      <MenuBar>
        {menu.map((name) => (
          <MenuItem key={name} type="button">
            {name}
          </MenuItem>
        ))}
      </MenuBar>
      <ToolRow>
        <Strip>
          <Tools list="new open save | print preview printset plot batch | cut copy paste pastespec erase | undo redo | hand zoomrt | zoomwin zoomext zoomall | dist ruler | help" />
        </Strip>
        <Strip>
          <Tools list="textstyle" />
          <Combo label="Стиль текста" w={205} />
          <Sep />
          <Tools list="dimstyle" />
          <Combo label="Размерный стиль" w={205} />
        </Strip>
        <Strip>
          <Tools list="ncad ncadlink chain" />
        </Strip>
      </ToolRow>
      <ToolRow>
        <Strip>
          <Tools list="frame* column* cards* dimsel* leader* nodeA* axis* selbox* notes* | palette*" />
        </Strip>
        <Strip>
          <Tools list="clip! | find |" />
          <Combo label="Слой" w={364} />
          <Tools list="layers layeye layarrow" />
          <Combo label="Цвет" w={146} />
          <Combo label="Тип линии" w={146} />
          <Combo label="Вес линии" w={146} />
        </Strip>
      </ToolRow>
      <ToolRow>
        <Strip>
          <Tools list="selbox bolt | boltpage boltred boltpair boltset | motor circsq sqback sqfront | ibeam ibeamc ibeamd | pagec pager drawing pageA | fx cube | vise" />
        </Strip>
        <Strip>
          <Tools list="notes | boltcap boltbrush | shaft | cone section chamfer fillet | elbow flange tee | spring" />
        </Strip>
        <Strip>
          <Tools list="palette abrush boltbrush | framep | sand1 sand2 clock1 clock2 | filter lens | tbl" />
        </Strip>
      </ToolRow>
      <Work>
        <Side>
          <VStrip>
            <Tools
              v
              list="line ray* pline polygon rect* arc* circle* | cloud spline ellipse* | hatch* | region* block* | point* | cards text* | circles"
            />
          </VStrip>
        </Side>
        <Center>
          <Columns>
            <Dock>
              <DockBox>
                <DockHead>
                  <DockTitle>База элементов</DockTitle>
                  <SmallButton type="button" aria-label="pin">
                    <Icon name="pin" size={14} />
                  </SmallButton>
                  <SmallButton type="button" aria-label="close">
                    <Icon name="close" size={12} />
                  </SmallButton>
                </DockHead>
                <DockBody>
                  <DockTools>
                    <Tools w={23} list="del foldernew | boltpage shapes lensbox | refresh | helpnote" />
                  </DockTools>
                  <ElementTree />
                </DockBody>
              </DockBox>
              <DockTabs>
                {dockTabs.map((name) => (
                  <DockTab key={name} type="button" $on={name === "База элементов"}>
                    {name}
                  </DockTab>
                ))}
              </DockTabs>
            </Dock>
            <Document />
          </Columns>
          <CommandLine />
        </Center>
        <Side>
          <VStrip>
            <Tools
              v
              list="erase mirror diag offset array | move rotate | scale stretch | trim extend lengthen break2 break1 align | cham fil | bomb sand1"
            />
          </VStrip>
          <VStrip>
            <Tools v list="front1 front2 front3 front4 abc dimfront dimA hatchfront" />
          </VStrip>
        </Side>
      </Work>
      <StatusBar />
    </Page>
    <TableEditor />
  </>
);

export default App;
